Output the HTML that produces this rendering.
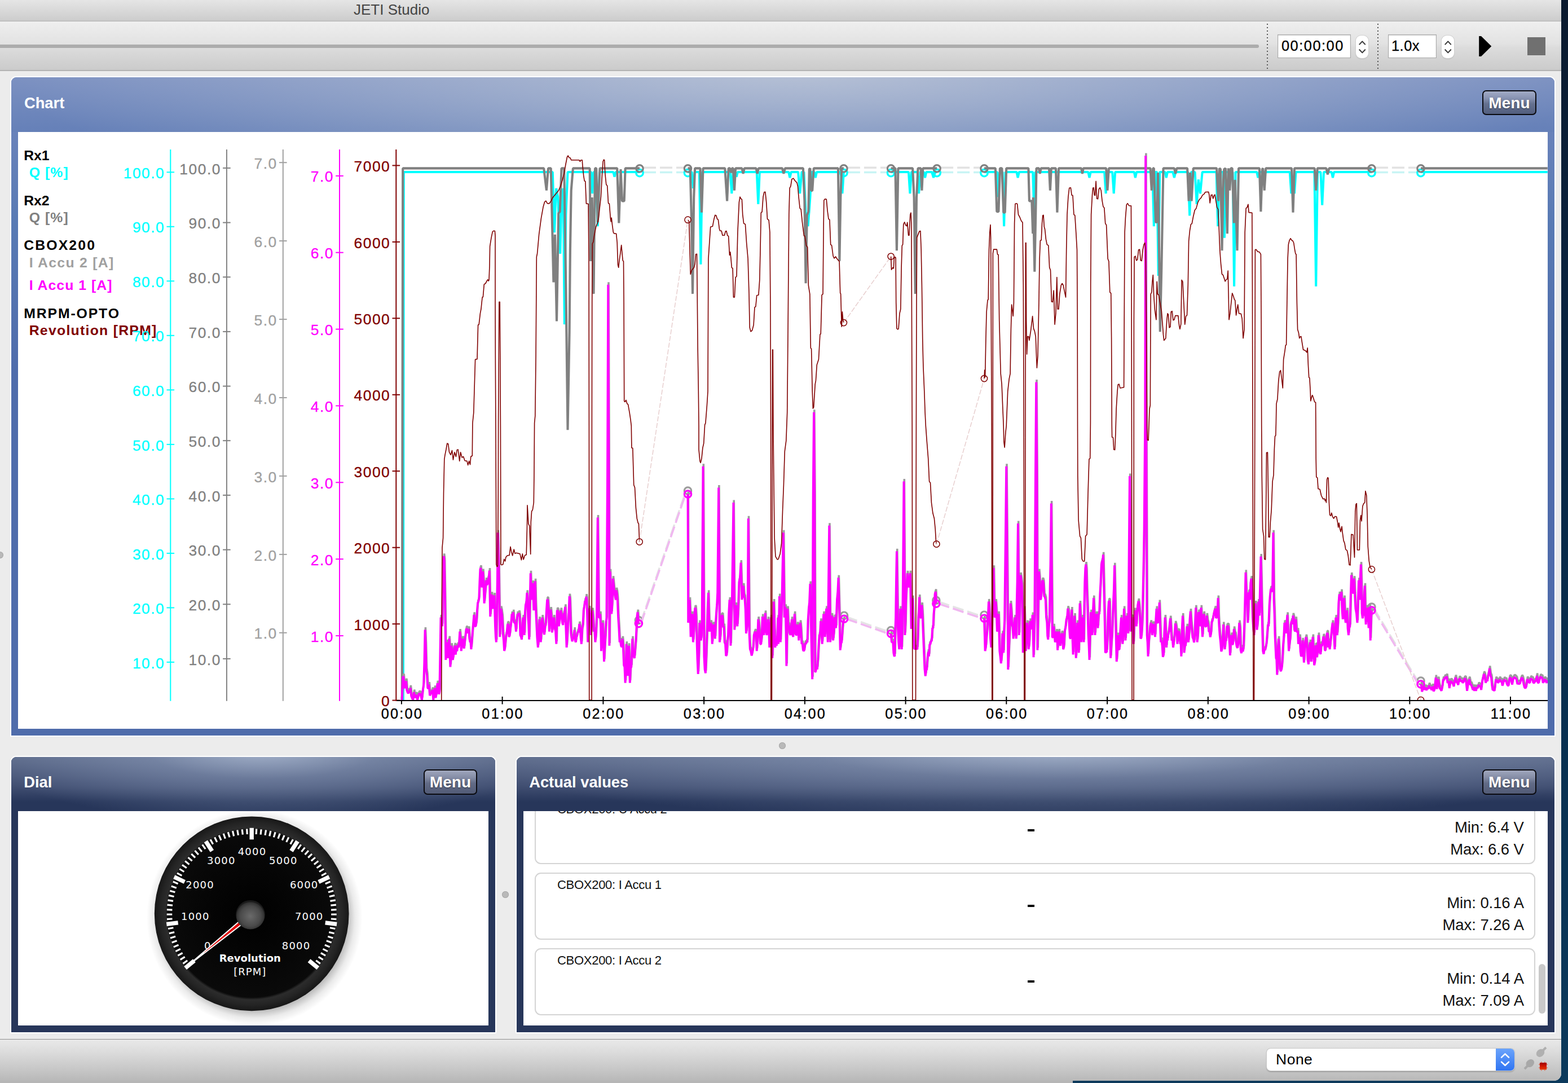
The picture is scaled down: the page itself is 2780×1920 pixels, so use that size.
<!DOCTYPE html>
<html lang="en"><head><meta charset="utf-8"><title>JETI Studio</title>
<style>
*{box-sizing:border-box;margin:0;padding:0}
html,body{width:2780px;height:1920px;overflow:hidden;background:linear-gradient(#0b1a2e 0,#0a2440 30%,#082e4e 62%,#0c3a5c 100%);font-family:"Liberation Sans",sans-serif}
.abs{position:absolute}
#win{position:absolute;left:0;top:0;width:2768px;height:1916px;background:#ececec;border-bottom-right-radius:13px;overflow:hidden}
#under{position:absolute;left:0;top:1916px;width:1902px;height:4px;background:#b6b6b6}
#titlebar{position:absolute;left:0;top:0;width:2768px;height:38px;background:linear-gradient(#e5e5e5,#d0d0d0 85%,#cacaca);border-bottom:1.5px solid #b0b0b0}
#title{position:absolute;left:627px;top:2.3px;font-size:26px;line-height:30px;color:#444;white-space:nowrap}
#toolbar{position:absolute;left:0;top:38px;width:2768px;height:87.5px;background:linear-gradient(#efefef 0,#e2e2e2 46%,#dcdcdc 54%,#cbcbcb 100%);border-bottom:2px solid #b3b3b3}
#groove{position:absolute;left:-10px;top:79px;width:2241.5px;height:6px;background:#acacac;border-radius:3px}
.dots{position:absolute;top:42px;height:80px;width:2px;background:repeating-linear-gradient(to bottom,#555 0,#555 2px,transparent 2px,transparent 6px)}
.field{position:absolute;top:61px;height:41.5px;background:#fff;border:1.5px solid #a9a9a9;box-shadow:inset 0 1px 2px rgba(0,0,0,.18);font-size:25.4px;line-height:39px;color:#000;white-space:nowrap;letter-spacing:1.5px;-webkit-text-stroke:.3px #000}
.step{position:absolute;top:62.5px;height:40.5px;width:22.5px;background:#fff;border-radius:9px;box-shadow:0 0 0 1px #d2d2d2,0 1px 2px rgba(0,0,0,.25)}
.step svg{position:absolute;left:0;top:0}
.panel{position:absolute;border:2px solid #fff;border-radius:11px 11px 0 0}
.panel .hdr{position:absolute;left:0;top:0;right:0;height:97px;border-radius:9px 9px 0 0}
.panel .ttl{position:absolute;left:22.2px;top:28.8px;font-size:27.3px;line-height:32px;font-weight:bold;color:#fff;white-space:nowrap}
.panel .white{position:absolute;background:#fff;overflow:hidden}
.menu{position:absolute;width:95.5px;height:44.5px;border:2.5px solid #0a0a0f;border-radius:7px;color:#fff;font-weight:bold;font-size:28px;line-height:42.5px;letter-spacing:.1px;text-align:center;text-shadow:0 1px 2px rgba(0,0,0,.5)}
#chartp{left:18.2px;top:135.4px;width:2739.6px;height:1170.8px;background:linear-gradient(#7c92c2 0,#6982ba 96px,#587ab4 260px,#4f6cab 520px,#4f6cab 100%)}
#chartp .hdr{background:radial-gradient(ellipse 1420px 235px at 51% -10px,rgba(215,220,225,.64) 0,rgba(215,220,225,.35) 46%,rgba(215,220,225,0) 100%),linear-gradient(#7b90c1,#6580b8)}
#chartp .ttl{top:30.1px;left:22.8px}
#chartp .menu{left:2608px;top:22.5px;background:linear-gradient(#a2abc6 0,#8893b2 30%,#65718f 55%,#525e7e 100%)}
.dark{background:#27365a}
.dark .hdr{background:radial-gradient(ellipse 60% 130% at 52% -12%,rgba(190,204,226,.72) 0,rgba(150,166,196,.44) 40%,rgba(60,76,112,0) 100%),linear-gradient(#5c6a8a 0,#3f4d70 55%,#27365a 82%,#27365a 100%)}
.dark .menu{top:22px;background:linear-gradient(#a0a7bd 0,#858da6 30%,#626b86 55%,#525b76 100%)}
.dot{position:absolute;width:12px;height:12px;border-radius:50%;background:#b9b9b9;box-shadow:inset 0 0 0 1px #a8a8a8}
.leg{position:absolute;font-weight:bold;font-size:24.8px;line-height:28px;white-space:nowrap}
.card{position:absolute;left:20.3px;width:1774px;height:119px;border:2px solid #d4d4d4;border-radius:11px;background:#fff}
.card .nm{position:absolute;left:37.5px;top:7.1px;font-size:22px;line-height:24px;color:#111;letter-spacing:-.28px;white-space:nowrap}
.card .dash{position:absolute;left:871.4px;top:54.5px;width:12px;height:4px;background:#000}
.card .mm{position:absolute;right:18.6px;font-size:27.5px;line-height:30px;color:#111;letter-spacing:-.08px;white-space:nowrap;text-align:right}
#status{position:absolute;left:0;top:1842px;width:2768px;height:74px;background:linear-gradient(#e9e9e9 0,#dcdcdc 30%,#c3c3c3 80%,#b8b8b8 100%);border-top:1.5px solid #8f8f8f}
#combo{position:absolute;left:2245.5px;top:1858.5px;width:439.5px;height:39px;background:#fff;border-radius:7px;box-shadow:0 0 0 1px #c9c9c9,0 1.5px 2.5px rgba(0,0,0,.3);overflow:hidden;font-size:26.5px;line-height:38px;color:#000}
#combo span{position:absolute;left:16.5px;top:0;letter-spacing:.5px}
#combo i{position:absolute;right:0;top:0;width:33px;height:39px;background:linear-gradient(#6ba4fb,#2f74f2)}
svg.chart,svg.dial{position:absolute;left:0;top:0;pointer-events:none}
</style></head>
<body>
<div id="under"></div>
<div id="win">
 <div id="titlebar"><div id="title">JETI Studio</div></div>
 <div id="toolbar"></div>
 <div id="groove"></div>
 <div class="dots" style="left:2246px"></div>
 <div class="dots" style="left:2442px"></div>
 <div class="field" style="left:2265px;width:129.5px;padding-left:6px">00:00:00</div>
 <div class="step" style="left:2403.5px"><svg width="22.5" height="40.5" viewBox="0 0 22.5 40.5"><path d="M6.3 15.6 L11.25 10.4 L16.2 15.6 M6.3 25.2 L11.25 30.4 L16.2 25.2" fill="none" stroke="#3a3a3a" stroke-width="2.1" stroke-linecap="round" stroke-linejoin="round"/></svg></div>
 <div class="field" style="left:2461px;width:86px;padding-left:5px;letter-spacing:.5px">1.0x</div>
 <div class="step" style="left:2555.5px"><svg width="22.5" height="40.5" viewBox="0 0 22.5 40.5"><path d="M6.3 15.6 L11.25 10.4 L16.2 15.6 M6.3 25.2 L11.25 30.4 L16.2 25.2" fill="none" stroke="#3a3a3a" stroke-width="2.1" stroke-linecap="round" stroke-linejoin="round"/></svg></div>
 <svg class="abs" style="left:2620px;top:62px" width="28" height="40" viewBox="0 0 28 40"><path d="M2.2 2 L6 2 L24.3 20 L6 38 L2.2 38 Z" fill="#000"/></svg>
 <div class="abs" style="left:2708.3px;top:66px;width:31.5px;height:32px;background:#707070"></div>

 <div class="dot" style="left:-6px;top:978px"></div>
 <div class="dot" style="left:1381px;top:1316px"></div>
 <div class="dot" style="left:890px;top:1579.5px"></div>

 <!-- Chart panel -->
 <div class="panel" id="chartp">
  <div class="hdr"></div>
  <div class="ttl">Chart</div>
  <div class="menu">Menu</div>
  <div class="white" style="left:11.7px;top:96.4px;width:2712px;height:1058.2px"></div>
 </div>
 <div class="leg" style="left:42.2px;top:261.5px;color:#000;letter-spacing:-0.08px">Rx1</div>
 <div class="leg" style="left:51.7px;top:292.0px;color:#00ffff;letter-spacing:1.07px">Q [%]</div>
 <div class="leg" style="left:42.2px;top:341.5px;color:#000;letter-spacing:-0.08px">Rx2</div>
 <div class="leg" style="left:51.7px;top:372.0px;color:#808080;letter-spacing:1.07px">Q [%]</div>
 <div class="leg" style="left:42.2px;top:421.3px;color:#000;letter-spacing:2.12px">CBOX200</div>
 <div class="leg" style="left:51.7px;top:451.6px;color:#a0a0a0;letter-spacing:1.27px">I Accu 2 [A]</div>
 <div class="leg" style="left:51.7px;top:491.6px;color:#ff00ff;letter-spacing:1.02px">I Accu 1 [A]</div>
 <div class="leg" style="left:42.2px;top:542.0px;color:#000;letter-spacing:1.87px">MRPM-OPTO</div>
 <div class="leg" style="left:51.7px;top:572.0px;color:#800000;letter-spacing:1.27px">Revolution [RPM]</div>
<svg class="chart" width="2780" height="1920" viewBox="0 0 2780 1920">
<defs><clipPath id="pc"><rect x="700" y="262" width="2044" height="981"/></clipPath></defs>
<line x1="302.3" y1="265" x2="302.3" y2="1242.8" stroke="#00ffff" stroke-width="2"/>
<line x1="295.5" y1="305.3" x2="309.1" y2="305.3" stroke="#00ffff" stroke-width="2"/>
<text x="292.3" y="315.9" text-anchor="end" fill="#00ffff" stroke="#00ffff" stroke-width="0.3" font-size="26.4" letter-spacing="1.5" font-family="Liberation Sans, sans-serif">100.0</text>
<line x1="295.5" y1="401.8" x2="309.1" y2="401.8" stroke="#00ffff" stroke-width="2"/>
<text x="292.3" y="412.4" text-anchor="end" fill="#00ffff" stroke="#00ffff" stroke-width="0.3" font-size="26.4" letter-spacing="1.5" font-family="Liberation Sans, sans-serif">90.0</text>
<line x1="295.5" y1="498.3" x2="309.1" y2="498.3" stroke="#00ffff" stroke-width="2"/>
<text x="292.3" y="508.9" text-anchor="end" fill="#00ffff" stroke="#00ffff" stroke-width="0.3" font-size="26.4" letter-spacing="1.5" font-family="Liberation Sans, sans-serif">80.0</text>
<line x1="295.5" y1="594.8" x2="309.1" y2="594.8" stroke="#00ffff" stroke-width="2"/>
<text x="292.3" y="605.4" text-anchor="end" fill="#00ffff" stroke="#00ffff" stroke-width="0.3" font-size="26.4" letter-spacing="1.5" font-family="Liberation Sans, sans-serif">70.0</text>
<line x1="295.5" y1="691.3" x2="309.1" y2="691.3" stroke="#00ffff" stroke-width="2"/>
<text x="292.3" y="701.9" text-anchor="end" fill="#00ffff" stroke="#00ffff" stroke-width="0.3" font-size="26.4" letter-spacing="1.5" font-family="Liberation Sans, sans-serif">60.0</text>
<line x1="295.5" y1="787.9" x2="309.1" y2="787.9" stroke="#00ffff" stroke-width="2"/>
<text x="292.3" y="798.5" text-anchor="end" fill="#00ffff" stroke="#00ffff" stroke-width="0.3" font-size="26.4" letter-spacing="1.5" font-family="Liberation Sans, sans-serif">50.0</text>
<line x1="295.5" y1="884.4" x2="309.1" y2="884.4" stroke="#00ffff" stroke-width="2"/>
<text x="292.3" y="895.0" text-anchor="end" fill="#00ffff" stroke="#00ffff" stroke-width="0.3" font-size="26.4" letter-spacing="1.5" font-family="Liberation Sans, sans-serif">40.0</text>
<line x1="295.5" y1="980.9" x2="309.1" y2="980.9" stroke="#00ffff" stroke-width="2"/>
<text x="292.3" y="991.5" text-anchor="end" fill="#00ffff" stroke="#00ffff" stroke-width="0.3" font-size="26.4" letter-spacing="1.5" font-family="Liberation Sans, sans-serif">30.0</text>
<line x1="295.5" y1="1077.4" x2="309.1" y2="1077.4" stroke="#00ffff" stroke-width="2"/>
<text x="292.3" y="1088.0" text-anchor="end" fill="#00ffff" stroke="#00ffff" stroke-width="0.3" font-size="26.4" letter-spacing="1.5" font-family="Liberation Sans, sans-serif">20.0</text>
<line x1="295.5" y1="1173.9" x2="309.1" y2="1173.9" stroke="#00ffff" stroke-width="2"/>
<text x="292.3" y="1184.5" text-anchor="end" fill="#00ffff" stroke="#00ffff" stroke-width="0.3" font-size="26.4" letter-spacing="1.5" font-family="Liberation Sans, sans-serif">10.0</text>
<line x1="401.9" y1="265" x2="401.9" y2="1242.8" stroke="#808080" stroke-width="2"/>
<line x1="395.09999999999997" y1="297.9" x2="408.7" y2="297.9" stroke="#808080" stroke-width="2"/>
<text x="391.9" y="308.5" text-anchor="end" fill="#808080" stroke="#808080" stroke-width="0.3" font-size="26.4" letter-spacing="1.5" font-family="Liberation Sans, sans-serif">100.0</text>
<line x1="395.09999999999997" y1="394.6" x2="408.7" y2="394.6" stroke="#808080" stroke-width="2"/>
<text x="391.9" y="405.2" text-anchor="end" fill="#808080" stroke="#808080" stroke-width="0.3" font-size="26.4" letter-spacing="1.5" font-family="Liberation Sans, sans-serif">90.0</text>
<line x1="395.09999999999997" y1="491.2" x2="408.7" y2="491.2" stroke="#808080" stroke-width="2"/>
<text x="391.9" y="501.8" text-anchor="end" fill="#808080" stroke="#808080" stroke-width="0.3" font-size="26.4" letter-spacing="1.5" font-family="Liberation Sans, sans-serif">80.0</text>
<line x1="395.09999999999997" y1="587.9" x2="408.7" y2="587.9" stroke="#808080" stroke-width="2"/>
<text x="391.9" y="598.5" text-anchor="end" fill="#808080" stroke="#808080" stroke-width="0.3" font-size="26.4" letter-spacing="1.5" font-family="Liberation Sans, sans-serif">70.0</text>
<line x1="395.09999999999997" y1="684.6" x2="408.7" y2="684.6" stroke="#808080" stroke-width="2"/>
<text x="391.9" y="695.2" text-anchor="end" fill="#808080" stroke="#808080" stroke-width="0.3" font-size="26.4" letter-spacing="1.5" font-family="Liberation Sans, sans-serif">60.0</text>
<line x1="395.09999999999997" y1="781.2" x2="408.7" y2="781.2" stroke="#808080" stroke-width="2"/>
<text x="391.9" y="791.9" text-anchor="end" fill="#808080" stroke="#808080" stroke-width="0.3" font-size="26.4" letter-spacing="1.5" font-family="Liberation Sans, sans-serif">50.0</text>
<line x1="395.09999999999997" y1="877.9" x2="408.7" y2="877.9" stroke="#808080" stroke-width="2"/>
<text x="391.9" y="888.5" text-anchor="end" fill="#808080" stroke="#808080" stroke-width="0.3" font-size="26.4" letter-spacing="1.5" font-family="Liberation Sans, sans-serif">40.0</text>
<line x1="395.09999999999997" y1="974.6" x2="408.7" y2="974.6" stroke="#808080" stroke-width="2"/>
<text x="391.9" y="985.2" text-anchor="end" fill="#808080" stroke="#808080" stroke-width="0.3" font-size="26.4" letter-spacing="1.5" font-family="Liberation Sans, sans-serif">30.0</text>
<line x1="395.09999999999997" y1="1071.3" x2="408.7" y2="1071.3" stroke="#808080" stroke-width="2"/>
<text x="391.9" y="1081.9" text-anchor="end" fill="#808080" stroke="#808080" stroke-width="0.3" font-size="26.4" letter-spacing="1.5" font-family="Liberation Sans, sans-serif">20.0</text>
<line x1="395.09999999999997" y1="1167.9" x2="408.7" y2="1167.9" stroke="#808080" stroke-width="2"/>
<text x="391.9" y="1178.5" text-anchor="end" fill="#808080" stroke="#808080" stroke-width="0.3" font-size="26.4" letter-spacing="1.5" font-family="Liberation Sans, sans-serif">10.0</text>
<line x1="501.8" y1="265" x2="501.8" y2="1242.8" stroke="#a0a0a0" stroke-width="2"/>
<line x1="495.0" y1="288.2" x2="508.6" y2="288.2" stroke="#a0a0a0" stroke-width="2"/>
<text x="491.8" y="298.8" text-anchor="end" fill="#a0a0a0" stroke="#a0a0a0" stroke-width="0.3" font-size="26.4" letter-spacing="1.5" font-family="Liberation Sans, sans-serif">7.0</text>
<line x1="495.0" y1="427.1" x2="508.6" y2="427.1" stroke="#a0a0a0" stroke-width="2"/>
<text x="491.8" y="437.7" text-anchor="end" fill="#a0a0a0" stroke="#a0a0a0" stroke-width="0.3" font-size="26.4" letter-spacing="1.5" font-family="Liberation Sans, sans-serif">6.0</text>
<line x1="495.0" y1="566.1" x2="508.6" y2="566.1" stroke="#a0a0a0" stroke-width="2"/>
<text x="491.8" y="576.7" text-anchor="end" fill="#a0a0a0" stroke="#a0a0a0" stroke-width="0.3" font-size="26.4" letter-spacing="1.5" font-family="Liberation Sans, sans-serif">5.0</text>
<line x1="495.0" y1="705.0" x2="508.6" y2="705.0" stroke="#a0a0a0" stroke-width="2"/>
<text x="491.8" y="715.6" text-anchor="end" fill="#a0a0a0" stroke="#a0a0a0" stroke-width="0.3" font-size="26.4" letter-spacing="1.5" font-family="Liberation Sans, sans-serif">4.0</text>
<line x1="495.0" y1="843.9" x2="508.6" y2="843.9" stroke="#a0a0a0" stroke-width="2"/>
<text x="491.8" y="854.5" text-anchor="end" fill="#a0a0a0" stroke="#a0a0a0" stroke-width="0.3" font-size="26.4" letter-spacing="1.5" font-family="Liberation Sans, sans-serif">3.0</text>
<line x1="495.0" y1="982.9" x2="508.6" y2="982.9" stroke="#a0a0a0" stroke-width="2"/>
<text x="491.8" y="993.5" text-anchor="end" fill="#a0a0a0" stroke="#a0a0a0" stroke-width="0.3" font-size="26.4" letter-spacing="1.5" font-family="Liberation Sans, sans-serif">2.0</text>
<line x1="495.0" y1="1121.8" x2="508.6" y2="1121.8" stroke="#a0a0a0" stroke-width="2"/>
<text x="491.8" y="1132.4" text-anchor="end" fill="#a0a0a0" stroke="#a0a0a0" stroke-width="0.3" font-size="26.4" letter-spacing="1.5" font-family="Liberation Sans, sans-serif">1.0</text>
<line x1="602.0" y1="265" x2="602.0" y2="1242.8" stroke="#ff00ff" stroke-width="2"/>
<line x1="595.2" y1="311.8" x2="608.8" y2="311.8" stroke="#ff00ff" stroke-width="2"/>
<text x="592.0" y="322.4" text-anchor="end" fill="#ff00ff" stroke="#ff00ff" stroke-width="0.3" font-size="26.4" letter-spacing="1.5" font-family="Liberation Sans, sans-serif">7.0</text>
<line x1="595.2" y1="447.7" x2="608.8" y2="447.7" stroke="#ff00ff" stroke-width="2"/>
<text x="592.0" y="458.3" text-anchor="end" fill="#ff00ff" stroke="#ff00ff" stroke-width="0.3" font-size="26.4" letter-spacing="1.5" font-family="Liberation Sans, sans-serif">6.0</text>
<line x1="595.2" y1="583.6" x2="608.8" y2="583.6" stroke="#ff00ff" stroke-width="2"/>
<text x="592.0" y="594.2" text-anchor="end" fill="#ff00ff" stroke="#ff00ff" stroke-width="0.3" font-size="26.4" letter-spacing="1.5" font-family="Liberation Sans, sans-serif">5.0</text>
<line x1="595.2" y1="719.4" x2="608.8" y2="719.4" stroke="#ff00ff" stroke-width="2"/>
<text x="592.0" y="730.0" text-anchor="end" fill="#ff00ff" stroke="#ff00ff" stroke-width="0.3" font-size="26.4" letter-spacing="1.5" font-family="Liberation Sans, sans-serif">4.0</text>
<line x1="595.2" y1="855.3" x2="608.8" y2="855.3" stroke="#ff00ff" stroke-width="2"/>
<text x="592.0" y="865.9" text-anchor="end" fill="#ff00ff" stroke="#ff00ff" stroke-width="0.3" font-size="26.4" letter-spacing="1.5" font-family="Liberation Sans, sans-serif">3.0</text>
<line x1="595.2" y1="991.2" x2="608.8" y2="991.2" stroke="#ff00ff" stroke-width="2"/>
<text x="592.0" y="1001.8" text-anchor="end" fill="#ff00ff" stroke="#ff00ff" stroke-width="0.3" font-size="26.4" letter-spacing="1.5" font-family="Liberation Sans, sans-serif">2.0</text>
<line x1="595.2" y1="1127.1" x2="608.8" y2="1127.1" stroke="#ff00ff" stroke-width="2"/>
<text x="592.0" y="1137.7" text-anchor="end" fill="#ff00ff" stroke="#ff00ff" stroke-width="0.3" font-size="26.4" letter-spacing="1.5" font-family="Liberation Sans, sans-serif">1.0</text>
<line x1="702.3" y1="265" x2="702.3" y2="1242.8" stroke="#800000" stroke-width="2"/>
<line x1="695.5" y1="293.4" x2="709.0999999999999" y2="293.4" stroke="#800000" stroke-width="2"/>
<text x="692.3" y="304.0" text-anchor="end" fill="#800000" stroke="#800000" stroke-width="0.3" font-size="26.4" letter-spacing="1.5" font-family="Liberation Sans, sans-serif">7000</text>
<line x1="695.5" y1="428.9" x2="709.0999999999999" y2="428.9" stroke="#800000" stroke-width="2"/>
<text x="692.3" y="439.5" text-anchor="end" fill="#800000" stroke="#800000" stroke-width="0.3" font-size="26.4" letter-spacing="1.5" font-family="Liberation Sans, sans-serif">6000</text>
<line x1="695.5" y1="564.3" x2="709.0999999999999" y2="564.3" stroke="#800000" stroke-width="2"/>
<text x="692.3" y="574.9" text-anchor="end" fill="#800000" stroke="#800000" stroke-width="0.3" font-size="26.4" letter-spacing="1.5" font-family="Liberation Sans, sans-serif">5000</text>
<line x1="695.5" y1="699.8" x2="709.0999999999999" y2="699.8" stroke="#800000" stroke-width="2"/>
<text x="692.3" y="710.4" text-anchor="end" fill="#800000" stroke="#800000" stroke-width="0.3" font-size="26.4" letter-spacing="1.5" font-family="Liberation Sans, sans-serif">4000</text>
<line x1="695.5" y1="835.2" x2="709.0999999999999" y2="835.2" stroke="#800000" stroke-width="2"/>
<text x="692.3" y="845.8" text-anchor="end" fill="#800000" stroke="#800000" stroke-width="0.3" font-size="26.4" letter-spacing="1.5" font-family="Liberation Sans, sans-serif">3000</text>
<line x1="695.5" y1="970.7" x2="709.0999999999999" y2="970.7" stroke="#800000" stroke-width="2"/>
<text x="692.3" y="981.3" text-anchor="end" fill="#800000" stroke="#800000" stroke-width="0.3" font-size="26.4" letter-spacing="1.5" font-family="Liberation Sans, sans-serif">2000</text>
<line x1="695.5" y1="1106.2" x2="709.0999999999999" y2="1106.2" stroke="#800000" stroke-width="2"/>
<text x="692.3" y="1116.8" text-anchor="end" fill="#800000" stroke="#800000" stroke-width="0.3" font-size="26.4" letter-spacing="1.5" font-family="Liberation Sans, sans-serif">1000</text>
<line x1="695.5" y1="1241.6" x2="709.0999999999999" y2="1241.6" stroke="#800000" stroke-width="2"/>
<text x="692.3" y="1252.2" text-anchor="end" fill="#800000" stroke="#800000" stroke-width="0.3" font-size="26.4" letter-spacing="1.5" font-family="Liberation Sans, sans-serif">0</text>
<line x1="711.9" y1="1235" x2="711.9" y2="1248.5" stroke="#000" stroke-width="2"/>
<text x="712.9" y="1274.2" text-anchor="middle" fill="#000" stroke="#000" stroke-width="0.35" font-size="25.2" letter-spacing="2.3" font-family="Liberation Sans, sans-serif">00:00</text>
<line x1="890.6" y1="1235" x2="890.6" y2="1248.5" stroke="#000" stroke-width="2"/>
<text x="891.6" y="1274.2" text-anchor="middle" fill="#000" stroke="#000" stroke-width="0.35" font-size="25.2" letter-spacing="2.3" font-family="Liberation Sans, sans-serif">01:00</text>
<line x1="1069.4" y1="1235" x2="1069.4" y2="1248.5" stroke="#000" stroke-width="2"/>
<text x="1070.4" y="1274.2" text-anchor="middle" fill="#000" stroke="#000" stroke-width="0.35" font-size="25.2" letter-spacing="2.3" font-family="Liberation Sans, sans-serif">02:00</text>
<line x1="1248.1" y1="1235" x2="1248.1" y2="1248.5" stroke="#000" stroke-width="2"/>
<text x="1249.1" y="1274.2" text-anchor="middle" fill="#000" stroke="#000" stroke-width="0.35" font-size="25.2" letter-spacing="2.3" font-family="Liberation Sans, sans-serif">03:00</text>
<line x1="1426.9" y1="1235" x2="1426.9" y2="1248.5" stroke="#000" stroke-width="2"/>
<text x="1427.9" y="1274.2" text-anchor="middle" fill="#000" stroke="#000" stroke-width="0.35" font-size="25.2" letter-spacing="2.3" font-family="Liberation Sans, sans-serif">04:00</text>
<line x1="1605.6" y1="1235" x2="1605.6" y2="1248.5" stroke="#000" stroke-width="2"/>
<text x="1606.6" y="1274.2" text-anchor="middle" fill="#000" stroke="#000" stroke-width="0.35" font-size="25.2" letter-spacing="2.3" font-family="Liberation Sans, sans-serif">05:00</text>
<line x1="1784.3" y1="1235" x2="1784.3" y2="1248.5" stroke="#000" stroke-width="2"/>
<text x="1785.3" y="1274.2" text-anchor="middle" fill="#000" stroke="#000" stroke-width="0.35" font-size="25.2" letter-spacing="2.3" font-family="Liberation Sans, sans-serif">06:00</text>
<line x1="1963.1" y1="1235" x2="1963.1" y2="1248.5" stroke="#000" stroke-width="2"/>
<text x="1964.1" y="1274.2" text-anchor="middle" fill="#000" stroke="#000" stroke-width="0.35" font-size="25.2" letter-spacing="2.3" font-family="Liberation Sans, sans-serif">07:00</text>
<line x1="2141.8" y1="1235" x2="2141.8" y2="1248.5" stroke="#000" stroke-width="2"/>
<text x="2142.8" y="1274.2" text-anchor="middle" fill="#000" stroke="#000" stroke-width="0.35" font-size="25.2" letter-spacing="2.3" font-family="Liberation Sans, sans-serif">08:00</text>
<line x1="2320.6" y1="1235" x2="2320.6" y2="1248.5" stroke="#000" stroke-width="2"/>
<text x="2321.6" y="1274.2" text-anchor="middle" fill="#000" stroke="#000" stroke-width="0.35" font-size="25.2" letter-spacing="2.3" font-family="Liberation Sans, sans-serif">09:00</text>
<line x1="2499.3" y1="1235" x2="2499.3" y2="1248.5" stroke="#000" stroke-width="2"/>
<text x="2500.3" y="1274.2" text-anchor="middle" fill="#000" stroke="#000" stroke-width="0.35" font-size="25.2" letter-spacing="2.3" font-family="Liberation Sans, sans-serif">10:00</text>
<line x1="2678.0" y1="1235" x2="2678.0" y2="1248.5" stroke="#000" stroke-width="2"/>
<text x="2679.0" y="1274.2" text-anchor="middle" fill="#000" stroke="#000" stroke-width="0.35" font-size="25.2" letter-spacing="2.3" font-family="Liberation Sans, sans-serif">11:00</text>
<g clip-path="url(#pc)" fill="none" stroke-linejoin="bevel">
<path d="M714.8,1241.0 L715.8,304.5 L979.8,304.5 L983.0,411.7 L986.1,333.3 L989.2,349.0 L993.3,449.3 L995.5,349.0 L998.6,333.3 L1000.8,574.6 L1003.3,380.3 L1006.5,304.5 L1048.1,304.5 L1050.3,342.7 L1052.5,304.5 L1056.0,304.5 L1059.7,400.7 L1062.9,304.5 L1087.3,304.5 L1089.5,313.0 L1091.7,304.5 L1134.0,304.5" stroke="#00ffff" stroke-width="4.0" transform="translate(0,0.5)"/>
<path d="M1219.5,304.5 L1226.4,304.5 L1228.9,333.3 L1231.5,304.5 L1239.9,304.5 L1242.4,468.1 L1244.9,304.5 L1294.7,304.5 L1297.3,342.7 L1299.8,304.5 L1303.5,304.5 L1305.7,313.0 L1307.9,304.5 L1341.7,304.5 L1344.3,361.5 L1346.8,304.5 L1398.2,304.5 L1400.4,314.5 L1402.6,304.5 L1415.1,304.5 L1418.2,342.7 L1421.4,304.5 L1425.4,304.5 L1428.6,380.3 L1432.6,400.7 L1436.4,349.0 L1438.9,304.5 L1443.6,304.5 L1445.8,314.5 L1448.0,304.5 L1490.9,304.5 L1493.4,342.7 L1495.9,304.5" stroke="#00ffff" stroke-width="4.0" transform="translate(0,0.5)"/>
<path d="M1579.6,304.5 L1610.9,304.5 L1613.4,342.7 L1615.9,304.5 L1626.6,304.5 L1629.1,342.7 L1631.6,304.5 L1637.9,304.5 L1640.1,314.5 L1642.3,304.5 L1652.0,304.5 L1655.1,314.5 L1658.2,304.5 L1661.1,304.5" stroke="#00ffff" stroke-width="4.0" transform="translate(0,0.5)"/>
<path d="M1745.0,304.5 L1767.9,304.5 L1770.1,349.0 L1772.3,304.5 L1777.6,304.5 L1780.1,400.7 L1782.6,304.5 L1802.4,304.5 L1804.6,314.5 L1806.8,304.5 L1831.2,304.5 L1833.4,375.6 L1835.6,304.5 L1929.3,304.5 L1931.5,314.5 L1933.7,304.5 L1958.1,304.5 L1960.6,342.7 L1963.1,304.5 L1972.2,304.5 L1974.7,342.7 L1977.2,304.5 L2010.8,304.5 L2012.9,314.5 L2015.1,304.5 L2043.3,304.5 L2045.8,400.7 L2048.4,304.5 L2051.2,304.5 L2053.7,488.4 L2056.2,304.5 L2065.6,304.5 L2067.8,314.5 L2070.0,304.5 L2079.4,304.5 L2081.9,314.5 L2084.4,304.5 L2106.3,304.5 L2109.2,381.9 L2112.0,304.5 L2118.6,304.5 L2121.7,361.5 L2124.8,317.7 L2128.0,342.7 L2131.7,304.5 L2156.5,304.5 L2159.3,400.7 L2162.1,304.5 L2168.4,304.5 L2170.9,421.1 L2173.4,304.5 L2185.6,304.5 L2188.1,507.2 L2190.6,304.5 L2228.2,304.5 L2230.4,314.5 L2232.6,304.5 L2286.8,304.5 L2289.3,342.7 L2291.8,317.7 L2295.0,342.7 L2297.5,304.5 L2330.4,304.5 L2333.2,507.2 L2336.0,304.5 L2341.4,304.5 L2344.2,363.1 L2347.0,304.5 L2360.8,304.5 L2363.0,314.5 L2365.2,304.5 L2431.9,304.5" stroke="#00ffff" stroke-width="4.0" transform="translate(0,0.5)"/>
<path d="M2519.0,304.5 L2743.7,304.5" stroke="#00ffff" stroke-width="4.0" transform="translate(0,0.5)"/>
<line x1="1141.0" y1="305.5" x2="1212.5" y2="305.5" stroke="#c8f4f4" stroke-width="3.6" stroke-dasharray="22 7"/>
<circle cx="1134.0" cy="306.5" r="6.2" stroke="#00ffff" stroke-width="3.4"/>
<circle cx="1219.5" cy="306.5" r="6.2" stroke="#00ffff" stroke-width="3.4"/>
<line x1="1502.9" y1="305.5" x2="1572.6" y2="305.5" stroke="#c8f4f4" stroke-width="3.6" stroke-dasharray="22 7"/>
<circle cx="1495.9" cy="306.5" r="6.2" stroke="#00ffff" stroke-width="3.4"/>
<circle cx="1579.6" cy="306.5" r="6.2" stroke="#00ffff" stroke-width="3.4"/>
<line x1="1668.1" y1="305.5" x2="1738.0" y2="305.5" stroke="#c8f4f4" stroke-width="3.6" stroke-dasharray="22 7"/>
<circle cx="1661.1" cy="306.5" r="6.2" stroke="#00ffff" stroke-width="3.4"/>
<circle cx="1745.0" cy="306.5" r="6.2" stroke="#00ffff" stroke-width="3.4"/>
<line x1="2438.9" y1="305.5" x2="2512.0" y2="305.5" stroke="#c8f4f4" stroke-width="3.6" stroke-dasharray="22 7"/>
<circle cx="2431.9" cy="306.5" r="6.2" stroke="#00ffff" stroke-width="3.4"/>
<circle cx="2519.0" cy="306.5" r="6.2" stroke="#00ffff" stroke-width="3.4"/>
<path d="M712.8,1241.0 L714.2,297.3 L964.2,297.3 L968.9,336.5 L972.0,297.3 L976.7,297.3 L981.4,499.4 L983.9,414.8 L987.0,568.3 L990.2,377.2 L992.7,374.1 L995.5,297.3 L1000.2,297.3 L1003.3,505.7 L1006.5,761.0 L1009.6,587.1 L1010.9,443.0 L1012.7,336.5 L1015.9,297.3 L1045.6,297.3 L1047.2,461.8 L1049.7,349.0 L1052.5,519.8 L1055.0,297.3 L1057.2,297.3 L1059.7,392.9 L1063.5,297.3 L1094.2,297.3 L1097.3,394.4 L1100.5,298.9 L1103.0,355.3 L1106.7,355.3 L1108.6,297.3 L1134.0,297.3" stroke="#808080" stroke-width="4.1" transform="translate(0,1.1)"/>
<path d="M1219.5,297.3 L1223.6,297.3 L1225.8,380.3 L1228.0,519.8 L1230.2,349.0 L1232.1,297.3 L1241.5,297.3 L1244.0,375.6 L1246.5,297.3 L1285.3,297.3 L1289.1,355.3 L1291.6,297.3 L1294.1,297.3 L1296.3,305.1 L1297.9,297.3 L1299.8,297.3 L1302.0,336.5 L1304.1,297.3 L1315.4,297.3 L1317.6,306.7 L1319.8,297.3 L1340.5,297.3 L1342.7,306.7 L1344.9,297.3 L1386.9,297.3 L1389.4,306.7 L1391.9,297.3 L1423.9,297.3 L1426.4,355.3 L1428.6,501.0 L1430.8,380.3 L1433.3,374.1 L1434.8,298.9 L1436.4,297.3 L1438.3,336.5 L1440.2,337.1 L1442.7,297.3 L1485.9,297.3 L1488.4,461.8 L1490.3,349.0 L1492.2,297.3 L1495.9,297.3" stroke="#808080" stroke-width="4.1" transform="translate(0,1.1)"/>
<path d="M1579.6,297.3 L1587.4,297.3 L1589.9,443.0 L1592.4,297.3 L1618.1,297.3 L1620.6,349.0 L1622.8,519.8 L1625.0,349.0 L1627.5,297.3 L1632.6,297.3 L1634.4,336.5 L1636.3,297.3 L1661.1,297.3" stroke="#808080" stroke-width="4.1" transform="translate(0,1.1)"/>
<path d="M1745.0,297.3 L1764.8,297.3 L1767.3,374.1 L1770.4,374.1 L1772.9,297.3 L1776.4,297.3 L1779.2,375.6 L1781.7,375.6 L1784.2,297.3 L1823.4,297.3 L1824.9,355.3 L1829.3,355.3 L1831.2,413.2 L1831.8,349.0 L1834.3,480.6 L1836.2,380.3 L1837.5,297.3 L1841.9,297.3 L1843.7,306.7 L1845.6,297.3 L1860.0,297.3 L1861.9,336.5 L1863.8,297.3 L1871.9,297.3 L1874.4,375.6 L1877.0,297.3 L1917.1,297.3 L1918.9,306.7 L1920.8,297.3 L1961.2,297.3 L1963.4,336.5 L1965.9,297.3 L2039.6,297.3 L2041.8,336.5 L2044.3,297.3 L2045.8,297.3 L2049.0,392.9 L2051.2,392.9 L2053.1,305.1 L2054.3,380.3 L2056.8,587.1 L2059.3,474.3 L2062.5,297.3 L2081.9,297.3 L2084.1,306.7 L2086.3,297.3 L2105.1,297.3 L2107.6,355.3 L2110.1,305.1 L2112.6,355.3 L2115.7,297.3 L2157.1,297.3 L2160.2,355.3 L2162.1,297.3 L2164.0,298.9 L2166.5,443.0 L2169.0,317.7 L2170.3,298.9 L2172.8,297.3 L2175.9,413.2 L2177.8,297.3 L2180.3,336.5 L2182.2,297.3 L2184.7,297.3 L2187.8,394.4 L2189.7,317.7 L2193.5,443.0 L2196.0,297.3 L2232.9,297.3 L2235.4,374.1 L2237.9,298.9 L2239.2,297.3 L2241.7,336.5 L2244.2,297.3 L2290.0,297.3 L2292.5,375.6 L2295.0,297.3 L2330.7,297.3 L2333.2,336.5 L2335.7,297.3 L2351.4,297.3 L2353.9,308.3 L2356.4,297.3 L2431.9,297.3" stroke="#808080" stroke-width="4.1" transform="translate(0,1.1)"/>
<path d="M2519.0,297.3 L2743.7,297.3" stroke="#808080" stroke-width="4.1" transform="translate(0,1.1)"/>
<line x1="1141.0" y1="297.3" x2="1212.5" y2="297.3" stroke="#e2e2e2" stroke-width="3.6" stroke-dasharray="22 7"/>
<circle cx="1134.0" cy="298.8" r="6.2" stroke="#808080" stroke-width="3.2"/>
<circle cx="1219.5" cy="298.8" r="6.2" stroke="#808080" stroke-width="3.2"/>
<line x1="1502.9" y1="297.3" x2="1572.6" y2="297.3" stroke="#e2e2e2" stroke-width="3.6" stroke-dasharray="22 7"/>
<circle cx="1495.9" cy="298.8" r="6.2" stroke="#808080" stroke-width="3.2"/>
<circle cx="1579.6" cy="298.8" r="6.2" stroke="#808080" stroke-width="3.2"/>
<line x1="1668.1" y1="297.3" x2="1738.0" y2="297.3" stroke="#e2e2e2" stroke-width="3.6" stroke-dasharray="22 7"/>
<circle cx="1661.1" cy="298.8" r="6.2" stroke="#808080" stroke-width="3.2"/>
<circle cx="1745.0" cy="298.8" r="6.2" stroke="#808080" stroke-width="3.2"/>
<line x1="2438.9" y1="297.3" x2="2512.0" y2="297.3" stroke="#e2e2e2" stroke-width="3.6" stroke-dasharray="22 7"/>
<circle cx="2431.9" cy="298.8" r="6.2" stroke="#808080" stroke-width="3.2"/>
<circle cx="2519.0" cy="298.8" r="6.2" stroke="#808080" stroke-width="3.2"/>
<path d="M712.6,1241.0 L713.5,1215.7 L714.4,1199.6 L715.5,1200.0 L716.6,1218.4 L717.7,1220.0 L718.8,1213.7 L720.1,1207.3 L721.3,1223.1 L722.6,1227.2 L723.8,1229.4 L724.9,1225.1 L726.0,1227.8 L727.6,1219.5 L729.2,1234.1 L730.7,1237.7 L732.3,1241.0 L733.9,1227.1 L735.4,1237.2 L737.0,1233.2 L738.6,1232.5 L740.1,1241.0 L742.7,1229.8 L745.4,1230.4 L748.0,1241.0 L749.5,1225.4 L751.1,1213.7 L752.4,1173.7 L753.6,1116.6 L754.7,1142.9 L755.8,1188.7 L757.1,1197.1 L758.3,1220.0 L759.4,1220.2 L760.5,1213.7 L762.1,1233.2 L763.6,1229.4 L765.2,1228.3 L766.8,1223.1 L768.3,1241.0 L769.6,1227.8 L770.8,1220.0 L772.4,1237.1 L774.0,1229.4 L775.5,1211.4 L777.1,1216.9 L778.2,1230.9 L779.3,1226.3 L781.5,1094.7 L782.7,1097.0 L784.0,1110.3 L784.9,1044.7 L785.9,997.5 L786.8,986.0 L787.8,994.4 L789.0,1063.3 L790.3,1169.9 L791.2,1149.2 L792.1,1138.5 L793.1,1160.9 L794.0,1166.7 L795.3,1141.2 L796.5,1132.3 L797.5,1159.5 L798.4,1182.4 L799.4,1167.2 L800.3,1144.8 L801.5,1154.0 L802.8,1169.9 L804.1,1161.7 L805.3,1151.1 L806.6,1144.4 L807.8,1160.5 L809.1,1145.9 L810.3,1154.2 L811.6,1143.4 L812.8,1147.9 L814.1,1138.5 L815.3,1119.7 L816.6,1135.1 L817.8,1154.2 L819.1,1138.4 L820.3,1132.3 L821.6,1143.1 L822.9,1149.5 L824.1,1136.5 L825.4,1126.0 L826.6,1115.3 L827.9,1115.0 L829.4,1122.7 L831.0,1115.0 L832.3,1132.0 L833.5,1138.5 L834.4,1138.2 L835.4,1151.1 L836.6,1137.3 L837.9,1119.7 L839.1,1105.5 L840.4,1090.0 L842.0,1109.9 L843.5,1110.3 L844.8,1102.2 L846.0,1082.1 L847.1,1068.8 L848.2,1066.5 L849.3,1061.7 L850.4,1032.0 L851.4,1009.5 L852.3,1006.9 L853.2,1022.0 L854.2,1041.4 L855.1,1034.0 L856.1,1013.2 L857.3,1032.4 L858.6,1069.6 L859.7,1056.8 L860.8,1044.5 L861.9,1028.6 L863.0,1036.7 L864.2,1035.6 L865.5,1025.7 L866.6,1025.6 L867.7,1011.6 L869.2,1093.1 L870.5,1075.4 L871.7,1053.9 L873.0,1076.2 L874.2,1079.0 L875.3,1062.4 L876.4,1055.5 L878.0,1110.3 L878.9,1129.5 L879.9,1138.5 L880.8,1087.7 L881.8,1032.0 L882.7,944.3 L884.3,1000.7 L886.2,1129.1 L887.1,1106.2 L888.0,1079.0 L889.3,1085.7 L890.5,1094.7 L891.8,1123.9 L893.0,1135.4 L894.1,1154.0 L895.2,1149.5 L896.3,1137.1 L897.4,1126.0 L898.7,1120.9 L899.9,1107.2 L901.2,1106.8 L902.4,1129.1 L903.7,1126.5 L905.0,1113.5 L906.2,1104.8 L907.5,1088.4 L908.7,1099.7 L910.0,1085.3 L911.2,1103.0 L912.5,1104.1 L913.7,1106.3 L915.0,1119.7 L916.2,1101.1 L917.5,1088.4 L918.9,1092.0 L920.3,1086.8 L921.4,1094.0 L922.5,1126.0 L923.8,1128.9 L925.0,1133.8 L926.3,1105.6 L927.5,1094.7 L928.6,1100.4 L929.7,1126.0 L930.8,1087.9 L931.9,1072.7 L933.2,1068.7 L934.4,1050.8 L935.3,1063.1 L936.3,1094.7 L937.2,1107.7 L938.2,1133.8 L939.4,1072.3 L940.7,1016.3 L941.6,1049.5 L942.6,1063.3 L943.5,1037.6 L944.4,1033.6 L945.4,1056.5 L946.3,1082.1 L947.6,1057.6 L948.8,1030.4 L949.8,1072.5 L950.7,1094.7 L952.3,1129.6 L953.8,1147.9 L955.1,1132.3 L956.3,1097.8 L957.6,1112.4 L958.8,1138.5 L960.1,1114.4 L961.4,1094.7 L962.6,1103.5 L963.9,1119.7 L965.1,1125.0 L966.4,1110.3 L967.6,1108.1 L968.9,1082.1 L970.1,1063.7 L971.4,1063.3 L972.6,1083.1 L973.9,1119.7 L975.1,1093.2 L976.4,1080.6 L977.6,1094.0 L978.9,1121.3 L980.5,1107.6 L982.0,1094.7 L983.5,1112.7 L985.0,1119.8 L986.4,1141.7 L987.7,1082.1 L989.2,1083.3 L990.8,1110.3 L992.1,1098.8 L993.3,1088.1 L994.6,1082.1 L995.8,1094.8 L997.1,1104.1 L998.3,1108.0 L999.6,1088.4 L1000.8,1087.1 L1002.1,1075.9 L1003.3,1112.3 L1004.6,1147.9 L1005.8,1129.1 L1007.1,1104.1 L1008.4,1085.2 L1009.6,1057.1 L1010.5,1064.3 L1011.5,1094.7 L1012.4,1123.1 L1013.4,1130.7 L1014.6,1137.2 L1015.9,1129.1 L1017.1,1132.6 L1018.4,1116.6 L1019.6,1135.3 L1020.9,1138.5 L1022.1,1129.5 L1023.4,1126.0 L1024.6,1120.2 L1025.9,1119.7 L1027.2,1106.3 L1028.4,1113.5 L1029.7,1131.1 L1030.9,1141.7 L1032.2,1114.6 L1033.4,1110.3 L1034.7,1081.9 L1035.9,1075.9 L1037.2,1065.2 L1038.4,1069.6 L1039.4,1057.7 L1040.3,1063.3 L1041.3,1096.8 L1042.2,1138.5 L1043.1,1105.0 L1044.1,1094.7 L1045.0,1078.5 L1046.0,1088.4 L1046.9,1098.1 L1047.8,1126.0 L1049.1,1093.7 L1050.3,1082.1 L1051.6,1097.4 L1052.8,1119.7 L1054.1,1116.8 L1055.4,1138.5 L1056.6,1126.3 L1057.9,1094.7 L1059.7,917.6 L1061.6,1094.7 L1062.9,1094.5 L1064.1,1088.4 L1065.1,1112.2 L1066.0,1154.2 L1067.3,1122.7 L1068.5,1104.1 L1069.8,1134.6 L1071.0,1173.0 L1072.3,1146.0 L1073.5,1126.0 L1074.5,1102.1 L1075.4,1097.8 L1077.0,844.0 L1078.2,504.7 L1079.5,844.0 L1080.4,1144.8 L1081.7,1013.2 L1082.9,1059.9 L1084.2,1088.4 L1085.4,1069.9 L1086.7,1025.7 L1087.9,1037.4 L1089.2,1050.8 L1090.4,1056.7 L1091.7,1063.3 L1092.6,1046.3 L1093.6,1050.8 L1094.8,1062.4 L1096.1,1094.7 L1097.3,1112.5 L1098.6,1138.5 L1099.8,1135.6 L1101.1,1144.8 L1102.4,1147.1 L1103.6,1132.3 L1104.9,1147.0 L1106.1,1179.3 L1107.4,1182.5 L1108.6,1210.6 L1109.6,1187.9 L1110.5,1141.7 L1111.8,1170.6 L1113.0,1198.1 L1113.9,1162.3 L1114.9,1144.8 L1115.8,1178.8 L1116.8,1210.6 L1118.0,1184.2 L1119.3,1182.4 L1120.2,1158.1 L1121.2,1132.3 L1122.4,1160.4 L1123.7,1163.6 L1124.9,1166.8 L1126.2,1151.1 L1127.4,1135.8 L1128.7,1110.3 L1129.6,1091.6 L1130.6,1085.3 L1131.8,1104.1 L1132.4,1105.6" stroke="#9c9c9c" stroke-width="3.6" transform="translate(0.8,-4.5)"/>
<path d="M1219.5,876.0 L1220.2,1104.1 L1221.4,1080.2 L1222.7,1063.3 L1223.6,1087.6 L1224.6,1129.1 L1225.8,1115.8 L1227.1,1088.4 L1228.0,1114.3 L1228.9,1138.5 L1230.2,1119.2 L1231.5,1085.3 L1232.4,1077.7 L1233.3,1079.0 L1234.3,1095.3 L1235.2,1126.0 L1236.5,1168.6 L1237.7,1194.9 L1239.0,1162.1 L1240.2,1104.1 L1241.5,1128.9 L1242.7,1135.4 L1243.7,1127.7 L1244.6,1104.1 L1246.5,826.8 L1248.4,1163.6 L1249.6,1186.8 L1250.9,1193.4 L1252.1,1165.9 L1253.4,1126.0 L1254.6,1081.3 L1255.9,1050.8 L1256.8,1085.7 L1257.8,1119.7 L1259.0,1108.2 L1260.3,1104.1 L1261.5,1110.6 L1262.8,1141.7 L1264.0,1112.2 L1265.3,1107.2 L1266.5,1114.0 L1267.8,1132.3 L1269.1,1100.9 L1270.3,1082.1 L1271.2,1071.5 L1272.2,1050.8 L1274.1,864.4 L1275.9,1138.5 L1277.2,1128.5 L1278.5,1094.7 L1279.7,1091.7 L1281.0,1091.5 L1282.2,1112.3 L1283.5,1110.3 L1284.7,1138.7 L1286.0,1141.7 L1287.2,1162.9 L1288.5,1160.5 L1289.7,1139.7 L1291.0,1126.0 L1292.2,1087.4 L1293.5,1063.3 L1294.4,1097.0 L1295.4,1144.8 L1296.6,1096.2 L1297.9,1063.3 L1300.4,891.0 L1302.3,1116.6 L1303.5,1087.0 L1304.8,1072.7 L1306.0,1094.8 L1307.3,1110.3 L1308.8,1081.6 L1310.4,1032.0 L1312.0,1023.6 L1313.5,997.5 L1314.5,1029.9 L1315.4,1063.3 L1316.7,1054.8 L1317.9,1038.3 L1319.2,1057.0 L1320.4,1060.2 L1321.7,1080.7 L1322.9,1122.9 L1324.2,1112.9 L1325.5,1094.7 L1326.7,919.2 L1328.6,1126.0 L1329.8,1150.8 L1331.1,1154.2 L1332.7,1162.3 L1334.2,1155.8 L1335.5,1147.4 L1336.7,1126.0 L1338.0,1122.3 L1339.2,1119.7 L1340.5,1128.6 L1341.7,1154.2 L1343.0,1133.5 L1344.3,1097.8 L1345.5,1107.6 L1346.8,1126.0 L1348.0,1141.7 L1349.3,1141.7 L1350.5,1129.7 L1351.8,1093.1 L1353.0,1106.8 L1354.3,1126.0 L1355.5,1103.9 L1356.8,1086.8 L1358.0,1118.0 L1359.3,1126.0 L1360.5,1117.8 L1361.8,1097.8 L1363.1,1114.3 L1364.3,1147.9 L1365.6,1111.6 L1366.8,1094.7 L1368.1,1121.6 L1369.3,1166.7 L1370.6,1127.1 L1371.8,1066.5 L1373.1,1115.2 L1374.3,1147.9 L1375.6,1137.2 L1376.8,1144.8 L1378.1,1128.2 L1379.3,1094.7 L1380.0,1141.7 L1380.9,1111.9 L1381.9,1057.1 L1382.8,1101.9 L1383.8,1138.5 L1385.0,1098.6 L1386.3,1066.5 L1388.8,944.3 L1390.7,1094.7 L1391.6,1086.5 L1392.5,1075.9 L1393.5,1118.8 L1394.4,1180.8 L1395.4,1117.3 L1396.3,1079.0 L1397.5,1106.9 L1398.8,1110.3 L1400.1,1122.1 L1401.3,1126.0 L1402.6,1112.6 L1403.8,1097.8 L1405.1,1124.7 L1406.3,1129.1 L1407.6,1107.1 L1408.8,1088.4 L1410.1,1116.9 L1411.3,1126.0 L1412.6,1125.1 L1413.8,1107.2 L1415.1,1113.8 L1416.3,1135.4 L1417.6,1113.3 L1418.9,1104.1 L1420.1,1117.5 L1421.4,1141.7 L1422.6,1140.4 L1423.9,1152.6 L1425.1,1154.1 L1426.4,1151.1 L1427.6,1140.1 L1428.9,1141.7 L1430.1,1138.0 L1431.4,1138.5 L1432.6,1099.2 L1433.9,1079.0 L1435.1,1067.7 L1436.4,1035.1 L1437.3,1076.8 L1438.3,1126.0 L1439.2,1164.1 L1440.2,1204.3 L1441.7,875.3 L1443.0,730.7 L1444.2,875.3 L1445.2,1191.8 L1446.4,1189.3 L1447.7,1182.4 L1448.9,1186.7 L1450.2,1169.9 L1451.4,1145.9 L1452.7,1126.0 L1453.9,1124.3 L1455.2,1100.9 L1456.5,1121.3 L1457.7,1141.7 L1459.0,1115.9 L1460.2,1088.4 L1461.5,1109.4 L1462.7,1129.1 L1464.0,1091.6 L1465.2,1079.0 L1466.5,1107.2 L1467.7,1138.5 L1470.2,931.7 L1472.1,1138.5 L1473.4,1106.8 L1474.6,1091.5 L1475.9,1100.6 L1477.1,1135.4 L1478.4,1122.8 L1479.6,1094.7 L1480.9,1095.6 L1482.1,1113.5 L1483.1,1087.7 L1484.0,1063.3 L1485.3,1049.6 L1486.5,1024.2 L1487.5,1060.9 L1488.4,1094.7 L1489.7,1152.6 L1490.9,1141.1 L1492.2,1138.5 L1493.4,1121.8 L1494.7,1104.1 L1495.6,1102.1 L1496.6,1097.2" stroke="#9c9c9c" stroke-width="3.6" transform="translate(0.8,-4.5)"/>
<path d="M1579.6,1123.5 L1580.9,1138.4 L1582.1,1138.5 L1583.2,1137.7 L1584.3,1157.3 L1585.2,1162.0 L1586.2,1163.6 L1587.1,1122.6 L1588.1,1094.7 L1589.0,1030.1 L1589.9,977.2 L1591.8,1110.3 L1593.1,1137.8 L1594.3,1151.1 L1595.3,1115.2 L1596.2,1079.0 L1597.5,1116.6 L1598.7,1151.1 L1599.7,1114.0 L1600.6,1063.3 L1602.5,853.4 L1604.4,1126.0 L1605.3,1105.4 L1606.2,1063.3 L1607.5,1038.4 L1608.7,1016.3 L1610.0,1031.8 L1611.2,1041.4 L1612.5,1029.0 L1613.8,1016.3 L1614.7,1066.0 L1615.6,1115.0 L1616.9,1092.6 L1618.1,1060.2 L1619.4,1103.6 L1620.6,1149.5 L1622.2,1150.4 L1623.8,1149.5 L1625.0,1149.7 L1626.3,1151.1 L1627.2,1134.4 L1628.2,1094.7 L1629.1,1081.8 L1630.0,1058.6 L1631.0,1086.4 L1631.9,1094.7 L1633.2,1095.2 L1634.4,1072.7 L1635.7,1093.1 L1636.9,1126.0 L1638.2,1157.3 L1639.4,1185.5 L1640.7,1198.6 L1642.0,1188.7 L1643.2,1186.5 L1644.5,1166.7 L1645.7,1155.7 L1647.0,1163.6 L1648.2,1142.8 L1649.5,1141.7 L1650.7,1137.0 L1652.0,1135.4 L1653.2,1113.3 L1654.5,1113.5 L1655.4,1089.5 L1656.4,1079.0 L1657.6,1053.0 L1658.9,1049.2 L1659.8,1070.2" stroke="#9c9c9c" stroke-width="3.6" transform="translate(0.8,-4.5)"/>
<path d="M1745.0,1096.2 L1746.6,1154.2 L1747.9,1146.1 L1749.1,1129.1 L1750.1,1119.3 L1751.0,1094.7 L1751.9,1090.9 L1752.9,1066.5 L1753.8,1076.3 L1754.8,1104.1 L1756.0,1131.6 L1757.3,1147.9 L1758.2,1125.5 L1759.1,1094.7 L1760.4,1041.5 L1761.6,1006.9 L1762.6,1060.8 L1763.5,1094.7 L1764.5,1092.7 L1765.4,1066.5 L1766.7,1085.8 L1767.9,1119.7 L1769.2,1115.8 L1770.4,1088.4 L1771.4,1118.7 L1772.3,1154.2 L1773.6,1164.8 L1774.8,1176.1 L1776.1,1162.2 L1777.3,1122.9 L1778.3,1148.8 L1779.2,1157.3 L1780.1,1120.3 L1781.1,1100.9 L1783.0,938.0 L1784.2,826.8 L1786.1,1032.0 L1787.3,1187.1 L1788.6,1154.8 L1789.8,1126.0 L1790.8,1098.2 L1791.7,1069.6 L1793.0,1084.2 L1794.2,1107.2 L1795.5,1111.8 L1796.7,1132.3 L1798.0,1108.8 L1799.2,1094.7 L1800.5,1119.2 L1801.8,1132.3 L1802.7,1069.6 L1803.6,1032.0 L1804.9,928.0 L1806.8,1126.0 L1808.0,1074.1 L1809.3,1019.5 L1810.5,1027.3 L1811.8,1038.3 L1812.7,1085.3 L1813.7,1157.3 L1814.9,1113.8 L1816.2,1079.0 L1817.4,1119.8 L1818.7,1154.2 L1819.9,1129.5 L1821.2,1104.1 L1822.4,1116.2 L1823.7,1151.1 L1824.9,1138.6 L1826.2,1100.9 L1827.4,1114.7 L1828.7,1113.5 L1829.6,1114.0 L1830.6,1090.0 L1831.5,1117.3 L1832.5,1165.2 L1833.4,1123.8 L1834.3,1094.7 L1835.9,844.0 L1837.2,677.4 L1838.4,844.0 L1839.4,1152.6 L1841.9,1013.2 L1843.1,1026.3 L1844.4,1063.3 L1845.6,1061.2 L1846.9,1044.5 L1847.8,1030.7 L1848.8,1028.9 L1850.0,1033.3 L1851.3,1057.1 L1852.5,1058.2 L1853.8,1063.3 L1855.0,1094.4 L1856.3,1104.1 L1857.2,1127.3 L1858.2,1133.8 L1859.4,1111.1 L1860.7,1100.9 L1861.6,1041.7 L1862.5,1000.7 L1863.8,892.6 L1865.7,1129.1 L1866.9,1130.6 L1868.2,1110.3 L1869.4,1126.3 L1870.7,1138.5 L1871.9,1134.4 L1873.2,1119.7 L1874.1,1125.5 L1875.1,1152.6 L1876.3,1124.7 L1877.6,1119.7 L1878.8,1137.2 L1880.1,1144.8 L1881.3,1131.9 L1882.6,1122.9 L1883.8,1125.9 L1885.1,1151.1 L1886.4,1146.8 L1887.6,1119.7 L1889.2,1112.3 L1890.7,1097.8 L1892.0,1096.2 L1893.2,1079.0 L1894.5,1083.9 L1895.8,1110.3 L1897.0,1130.6 L1898.3,1132.3 L1899.2,1095.2 L1900.1,1080.6 L1901.4,1130.0 L1902.6,1160.5 L1903.9,1124.8 L1905.2,1091.5 L1906.4,1125.0 L1907.7,1166.7 L1908.9,1136.8 L1910.2,1104.1 L1911.4,1141.8 L1912.7,1157.3 L1913.6,1107.4 L1914.6,1069.6 L1915.8,1094.4 L1917.1,1138.5 L1918.3,1117.3 L1919.6,1094.7 L1920.5,1109.8 L1921.5,1138.5 L1922.4,1075.1 L1923.3,1032.0 L1924.3,1007.5 L1925.2,1000.7 L1926.2,1012.5 L1927.1,1047.7 L1928.3,1079.1 L1929.6,1126.0 L1930.5,1143.1 L1931.5,1169.9 L1932.7,1122.5 L1934.0,1085.3 L1935.2,1112.4 L1936.5,1126.0 L1937.7,1087.6 L1939.0,1060.2 L1940.3,1093.1 L1941.5,1126.0 L1942.8,1098.8 L1944.0,1088.4 L1945.3,1097.0 L1946.5,1113.5 L1947.8,1088.4 L1949.0,1088.4 L1950.3,1053.7 L1951.5,1032.0 L1952.8,1000.6 L1954.0,994.4 L1955.0,995.0 L1955.9,983.4 L1956.9,1024.7 L1957.8,1063.3 L1958.7,1102.3 L1959.7,1157.3 L1960.9,1155.9 L1962.2,1155.8 L1963.4,1131.8 L1964.7,1085.3 L1965.9,1065.6 L1967.2,1066.5 L1968.1,1124.9 L1969.1,1166.7 L1970.3,1144.6 L1971.6,1126.0 L1972.8,1094.5 L1974.1,1063.3 L1975.0,1041.5 L1976.0,1002.2 L1976.9,1045.7 L1977.9,1094.7 L1978.8,1134.0 L1979.7,1173.0 L1981.0,1154.4 L1982.2,1126.0 L1983.5,1151.1 L1984.7,1151.1 L1986.3,1118.8 L1987.9,1094.7 L1989.1,1126.8 L1990.4,1141.7 L1991.6,1115.7 L1992.9,1079.0 L1994.1,1110.7 L1995.4,1135.4 L1996.7,1111.0 L1997.9,1091.5 L1999.2,1103.2 L2000.4,1122.9 L2002.9,844.0 L2004.8,1119.7 L2006.1,1095.6 L2007.3,1094.7 L2008.6,1108.5 L2009.8,1141.7 L2011.1,1100.7 L2012.3,1082.1 L2013.6,1102.5 L2014.8,1110.3 L2016.1,1085.2 L2017.3,1072.7 L2018.6,1065.6 L2019.8,1075.9 L2021.1,1093.3 L2022.3,1132.3 L2023.6,1130.2 L2024.9,1110.3 L2025.8,1085.5 L2026.7,1041.4 L2027.7,994.1 L2028.6,938.0 L2030.2,750.0 L2031.1,276.0 L2032.1,750.0 L2033.6,1126.0 L2034.6,1139.1 L2035.5,1163.6 L2036.8,1138.1 L2038.0,1126.0 L2039.3,1109.7 L2040.5,1104.1 L2041.8,1114.0 L2043.0,1126.0 L2044.3,1107.7 L2045.5,1107.2 L2046.8,1116.8 L2048.0,1129.1 L2049.3,1097.9 L2050.5,1079.0 L2051.8,1103.5 L2053.1,1104.1 L2054.3,1098.3 L2055.6,1068.0 L2056.8,1104.5 L2058.1,1138.5 L2059.3,1135.0 L2060.6,1144.8 L2061.8,1164.7 L2063.1,1160.5 L2064.3,1122.6 L2065.6,1094.7 L2066.8,1117.6 L2068.1,1147.9 L2069.0,1128.7 L2070.0,1135.4 L2071.3,1124.5 L2072.5,1119.7 L2073.8,1107.3 L2075.0,1096.2 L2076.3,1115.9 L2077.5,1135.4 L2078.8,1133.9 L2080.0,1147.9 L2081.3,1137.1 L2082.5,1126.0 L2083.8,1105.3 L2085.0,1110.3 L2086.3,1119.9 L2087.5,1141.7 L2088.8,1120.0 L2090.1,1119.7 L2091.3,1128.1 L2092.6,1141.7 L2093.5,1140.7 L2094.4,1163.6 L2095.7,1115.2 L2096.9,1091.5 L2098.2,1119.4 L2099.5,1157.3 L2100.7,1144.1 L2102.0,1144.8 L2103.2,1129.8 L2104.5,1110.3 L2105.7,1125.2 L2107.0,1138.5 L2108.2,1124.7 L2109.5,1097.8 L2110.7,1083.7 L2112.0,1104.3 L2113.2,1116.6 L2114.5,1130.1 L2115.7,1132.3 L2117.0,1139.0 L2118.3,1126.0 L2119.2,1098.9 L2120.1,1077.4 L2121.4,1103.5 L2122.6,1138.5 L2123.9,1124.5 L2125.1,1085.3 L2126.4,1088.7 L2127.7,1110.3 L2128.6,1099.7 L2129.5,1077.4 L2130.8,1107.0 L2132.0,1129.1 L2133.3,1096.9 L2134.5,1088.4 L2135.8,1108.1 L2137.1,1110.3 L2138.3,1111.1 L2139.6,1091.5 L2140.8,1102.7 L2142.1,1107.2 L2143.3,1119.6 L2144.6,1119.7 L2145.8,1129.4 L2147.1,1122.9 L2148.3,1102.5 L2149.6,1100.9 L2150.8,1095.3 L2152.1,1088.4 L2153.3,1083.8 L2154.6,1079.0 L2155.9,1095.5 L2157.1,1094.7 L2158.4,1085.4 L2159.6,1060.2 L2160.6,1093.8 L2161.5,1110.3 L2162.7,1126.6 L2164.0,1138.5 L2165.3,1155.0 L2166.5,1151.1 L2167.8,1133.9 L2169.0,1107.2 L2170.3,1134.2 L2171.5,1151.1 L2172.8,1136.2 L2174.0,1135.4 L2175.3,1110.7 L2176.5,1110.3 L2177.8,1110.2 L2179.0,1129.1 L2180.0,1142.0 L2180.9,1162.0 L2182.2,1133.8 L2183.4,1126.0 L2184.7,1142.6 L2185.9,1141.7 L2186.9,1129.9 L2187.8,1115.0 L2189.1,1123.8 L2190.3,1126.0 L2191.6,1139.5 L2192.8,1146.4 L2194.1,1148.7 L2195.3,1141.7 L2196.3,1122.6 L2197.2,1104.1 L2198.5,1115.4 L2199.7,1152.6 L2201.0,1158.0 L2202.2,1147.9 L2203.5,1155.2 L2204.7,1149.5 L2205.7,1122.2 L2206.6,1094.7 L2207.6,1055.6 L2208.5,1014.8 L2209.4,1043.2 L2210.4,1063.3 L2211.3,1072.4 L2212.3,1104.1 L2213.2,1083.6 L2214.1,1050.8 L2215.1,1050.6 L2216.0,1063.3 L2217.3,1033.5 L2218.5,1025.7 L2219.8,1054.1 L2221.0,1094.7 L2222.3,1116.3 L2223.5,1126.0 L2224.8,1090.1 L2226.0,1069.6 L2227.3,1099.3 L2228.5,1116.6 L2229.8,1103.9 L2231.1,1066.5 L2232.0,1078.8 L2232.9,1091.5 L2234.2,1036.0 L2235.4,986.6 L2236.4,1032.2 L2237.3,1079.0 L2238.3,1121.4 L2239.2,1154.2 L2240.5,1159.6 L2241.7,1151.1 L2243.0,1152.5 L2244.2,1147.9 L2245.5,1140.7 L2246.7,1126.0 L2248.0,1107.2 L2249.2,1110.3 L2250.5,1074.5 L2251.7,1057.1 L2253.0,1044.4 L2254.2,1044.5 L2255.2,1049.3 L2256.1,1041.4 L2257.4,944.3 L2258.6,1063.3 L2259.6,1089.6 L2260.5,1126.0 L2261.5,1148.1 L2262.4,1166.7 L2263.3,1168.9 L2264.3,1196.5 L2265.5,1153.0 L2266.8,1132.3 L2268.0,1152.9 L2269.3,1185.5 L2270.9,1190.0 L2272.4,1185.5 L2273.7,1170.2 L2274.9,1144.8 L2276.2,1129.0 L2277.4,1104.1 L2278.7,1108.0 L2279.9,1122.9 L2281.2,1106.9 L2282.4,1090.0 L2283.7,1121.2 L2285.0,1154.2 L2286.2,1142.4 L2287.5,1132.3 L2288.7,1106.7 L2290.0,1100.9 L2291.2,1106.5 L2292.5,1091.5 L2293.7,1096.3 L2295.0,1116.6 L2296.2,1119.6 L2297.5,1097.8 L2298.7,1120.1 L2300.0,1119.7 L2300.9,1118.2 L2301.9,1141.7 L2303.1,1134.3 L2304.4,1129.1 L2305.6,1154.7 L2306.9,1163.6 L2308.1,1161.7 L2309.4,1135.4 L2310.6,1153.7 L2311.9,1174.6 L2313.2,1149.0 L2314.4,1135.4 L2315.7,1129.4 L2316.9,1138.5 L2318.5,1169.7 L2320.0,1177.7 L2321.3,1150.6 L2322.6,1138.5 L2323.8,1157.9 L2325.1,1173.0 L2326.3,1141.8 L2327.6,1129.1 L2328.8,1154.8 L2330.1,1179.3 L2331.3,1173.8 L2332.6,1144.8 L2333.8,1145.4 L2335.1,1165.2 L2336.3,1153.9 L2337.6,1126.0 L2338.8,1141.9 L2340.1,1157.3 L2341.4,1159.6 L2342.6,1141.7 L2343.9,1145.4 L2345.1,1138.5 L2346.4,1128.4 L2347.6,1132.3 L2348.9,1152.8 L2350.1,1152.6 L2351.4,1137.4 L2352.6,1122.9 L2353.9,1123.1 L2355.1,1147.9 L2356.4,1136.6 L2357.6,1151.1 L2358.9,1138.3 L2360.2,1126.0 L2361.4,1113.8 L2362.7,1104.1 L2363.9,1114.6 L2365.2,1126.1 L2366.4,1151.1 L2367.4,1118.8 L2368.3,1094.7 L2369.6,1105.6 L2370.8,1126.0 L2372.1,1106.7 L2373.3,1069.6 L2374.6,1053.5 L2375.8,1063.3 L2377.1,1062.8 L2378.3,1049.2 L2379.6,1082.3 L2380.8,1097.8 L2382.1,1069.1 L2383.3,1060.2 L2384.6,1093.2 L2385.8,1104.1 L2387.1,1098.6 L2388.4,1082.1 L2389.6,1114.5 L2390.9,1126.0 L2392.1,1112.7 L2393.4,1110.3 L2394.6,1061.6 L2395.9,1019.5 L2397.1,1032.4 L2398.4,1050.8 L2399.6,1051.2 L2400.9,1025.7 L2402.1,1054.7 L2403.4,1079.0 L2405.0,1087.9 L2406.5,1104.1 L2407.8,1064.6 L2409.0,1028.9 L2410.0,1040.3 L2410.9,1063.3 L2411.9,1020.3 L2412.8,1000.7 L2413.7,1033.4 L2414.7,1086.8 L2415.9,1096.3 L2417.2,1088.4 L2418.4,1057.8 L2419.7,1038.3 L2420.6,1084.1 L2421.6,1107.2 L2422.8,1085.8 L2424.1,1077.4 L2425.3,1089.4 L2426.6,1113.5 L2427.5,1095.0 L2428.5,1075.9 L2429.7,1135.4 L2431.0,1094.7 L2431.9,1082.1" stroke="#9c9c9c" stroke-width="3.6" transform="translate(0.8,-4.5)"/>
<path d="M2519.0,1213.1 L2520.1,1216.0 L2521.2,1226.3 L2522.8,1220.1 L2524.3,1216.9 L2525.9,1223.1 L2527.5,1218.4 L2529.0,1223.8 L2530.6,1220.0 L2532.2,1221.4 L2533.7,1215.3 L2535.3,1219.2 L2536.9,1220.0 L2538.4,1223.4 L2540.0,1216.9 L2541.6,1225.3 L2543.1,1223.1 L2544.4,1212.8 L2545.6,1201.2 L2546.6,1214.0 L2547.5,1221.6 L2548.8,1207.6 L2550.0,1204.3 L2551.3,1215.0 L2552.5,1220.0 L2554.1,1221.8 L2555.7,1224.7 L2557.2,1217.6 L2558.8,1204.3 L2560.4,1205.6 L2561.9,1200.7 L2563.5,1202.8 L2565.1,1198.9 L2566.6,1211.0 L2568.2,1207.5 L2569.8,1220.0 L2571.3,1209.3 L2572.9,1207.5 L2574.5,1210.3 L2576.0,1211.9 L2577.6,1216.9 L2579.2,1206.6 L2580.7,1201.2 L2582.3,1208.8 L2583.9,1210.6 L2585.4,1214.2 L2587.0,1203.6 L2588.6,1204.3 L2590.1,1208.3 L2591.7,1206.1 L2593.3,1210.6 L2594.8,1208.7 L2596.4,1204.1 L2598.0,1202.8 L2599.5,1209.8 L2601.1,1224.7 L2602.5,1213.9 L2603.8,1207.6 L2605.2,1204.3 L2606.8,1213.9 L2608.3,1213.7 L2609.9,1218.4 L2611.5,1223.1 L2612.7,1218.2 L2614.0,1224.9 L2615.2,1218.4 L2616.8,1224.9 L2618.3,1218.9 L2619.9,1220.0 L2621.5,1214.1 L2623.0,1216.9 L2624.6,1216.3 L2626.2,1223.1 L2627.7,1208.8 L2629.3,1202.4 L2630.9,1194.9 L2632.4,1197.9 L2634.0,1210.6 L2635.6,1205.9 L2637.1,1207.5 L2638.4,1197.1 L2639.7,1193.3 L2640.9,1184.9 L2642.5,1197.7 L2644.0,1201.2 L2645.3,1215.2 L2646.5,1223.1 L2648.1,1222.9 L2649.7,1224.7 L2650.9,1213.5 L2652.2,1204.3 L2653.4,1206.7 L2654.7,1207.0 L2655.9,1210.6 L2657.5,1208.1 L2659.1,1204.3 L2660.6,1209.0 L2662.2,1206.9 L2663.8,1215.7 L2665.3,1210.6 L2666.9,1204.6 L2668.5,1207.5 L2670.0,1205.9 L2671.6,1212.2 L2673.2,1215.3 L2674.7,1215.0 L2676.3,1202.5 L2677.9,1201.2 L2679.4,1204.7 L2681.0,1213.7 L2682.6,1204.5 L2684.1,1201.2 L2685.7,1201.1 L2687.3,1202.6 L2688.8,1204.3 L2690.4,1212.9 L2692.0,1210.6 L2693.5,1212.7 L2695.1,1210.9 L2696.7,1204.3 L2698.2,1201.2 L2699.8,1204.0 L2701.4,1212.2 L2702.9,1218.6 L2704.5,1220.0 L2706.1,1216.9 L2707.6,1204.3 L2709.2,1206.1 L2710.8,1209.6 L2712.3,1210.6 L2713.9,1202.5 L2715.5,1205.1 L2717.0,1204.3 L2718.6,1210.5 L2720.2,1210.3 L2721.7,1207.5 L2723.3,1207.0 L2724.9,1198.1 L2726.4,1210.0 L2728.0,1210.6 L2729.6,1204.5 L2731.1,1199.7 L2732.7,1201.2 L2734.3,1201.8 L2735.8,1210.6 L2737.4,1207.7 L2739.0,1204.3 L2740.5,1207.0 L2742.1,1210.7 L2743.7,1205.9" stroke="#9c9c9c" stroke-width="3.6" transform="translate(0.8,-4.5)"/>
<line x1="1136.4" y1="1102.1" x2="1215.5" y2="872.5" stroke="#e4e4e4" stroke-width="3.4" stroke-dasharray="20 7"/>
<circle cx="1132.4" cy="1099.6" r="6.2" stroke="#9c9c9c" stroke-width="3.2"/>
<circle cx="1219.5" cy="870.0" r="6.2" stroke="#9c9c9c" stroke-width="3.2"/>
<line x1="1500.6" y1="1093.7" x2="1575.6" y2="1120.0" stroke="#e4e4e4" stroke-width="3.4" stroke-dasharray="20 7"/>
<circle cx="1496.6" cy="1091.2" r="6.2" stroke="#9c9c9c" stroke-width="3.2"/>
<circle cx="1579.6" cy="1117.5" r="6.2" stroke="#9c9c9c" stroke-width="3.2"/>
<line x1="1663.8" y1="1066.7" x2="1741.0" y2="1092.7" stroke="#e4e4e4" stroke-width="3.4" stroke-dasharray="20 7"/>
<circle cx="1659.8" cy="1064.2" r="6.2" stroke="#9c9c9c" stroke-width="3.2"/>
<circle cx="1745.0" cy="1090.2" r="6.2" stroke="#9c9c9c" stroke-width="3.2"/>
<line x1="2435.9" y1="1078.6" x2="2515.0" y2="1209.6" stroke="#e4e4e4" stroke-width="3.4" stroke-dasharray="20 7"/>
<circle cx="2431.9" cy="1076.1" r="6.2" stroke="#9c9c9c" stroke-width="3.2"/>
<circle cx="2519.0" cy="1207.1" r="6.2" stroke="#9c9c9c" stroke-width="3.2"/>
<path d="M712.6,1241.0 L713.5,1215.7 L714.4,1199.6 L715.5,1200.0 L716.6,1218.4 L717.7,1220.0 L718.8,1213.7 L720.1,1207.3 L721.3,1223.1 L722.6,1227.2 L723.8,1229.4 L724.9,1225.1 L726.0,1227.8 L727.6,1219.5 L729.2,1234.1 L730.7,1237.7 L732.3,1241.0 L733.9,1227.1 L735.4,1237.2 L737.0,1233.2 L738.6,1232.5 L740.1,1241.0 L742.7,1229.8 L745.4,1230.4 L748.0,1241.0 L749.5,1225.4 L751.1,1213.7 L752.4,1173.7 L753.6,1116.6 L754.7,1142.9 L755.8,1188.7 L757.1,1197.1 L758.3,1220.0 L759.4,1220.2 L760.5,1213.7 L762.1,1233.2 L763.6,1229.4 L765.2,1228.3 L766.8,1223.1 L768.3,1241.0 L769.6,1227.8 L770.8,1220.0 L772.4,1237.1 L774.0,1229.4 L775.5,1211.4 L777.1,1216.9 L778.2,1230.9 L779.3,1226.3 L781.5,1094.7 L782.7,1097.0 L784.0,1110.3 L784.9,1044.7 L785.9,997.5 L786.8,986.0 L787.8,994.4 L789.0,1063.3 L790.3,1169.9 L791.2,1149.2 L792.1,1138.5 L793.1,1160.9 L794.0,1166.7 L795.3,1141.2 L796.5,1132.3 L797.5,1159.5 L798.4,1182.4 L799.4,1167.2 L800.3,1144.8 L801.5,1154.0 L802.8,1169.9 L804.1,1161.7 L805.3,1151.1 L806.6,1144.4 L807.8,1160.5 L809.1,1145.9 L810.3,1154.2 L811.6,1143.4 L812.8,1147.9 L814.1,1138.5 L815.3,1119.7 L816.6,1135.1 L817.8,1154.2 L819.1,1138.4 L820.3,1132.3 L821.6,1143.1 L822.9,1149.5 L824.1,1136.5 L825.4,1126.0 L826.6,1115.3 L827.9,1115.0 L829.4,1122.7 L831.0,1115.0 L832.3,1132.0 L833.5,1138.5 L834.4,1138.2 L835.4,1151.1 L836.6,1137.3 L837.9,1119.7 L839.1,1105.5 L840.4,1090.0 L842.0,1109.9 L843.5,1110.3 L844.8,1102.2 L846.0,1082.1 L847.1,1068.8 L848.2,1066.5 L849.3,1061.7 L850.4,1032.0 L851.4,1009.5 L852.3,1006.9 L853.2,1022.0 L854.2,1041.4 L855.1,1034.0 L856.1,1013.2 L857.3,1032.4 L858.6,1069.6 L859.7,1056.8 L860.8,1044.5 L861.9,1028.6 L863.0,1036.7 L864.2,1035.6 L865.5,1025.7 L866.6,1025.6 L867.7,1011.6 L869.2,1093.1 L870.5,1075.4 L871.7,1053.9 L873.0,1076.2 L874.2,1079.0 L875.3,1062.4 L876.4,1055.5 L878.0,1110.3 L878.9,1129.5 L879.9,1138.5 L880.8,1087.7 L881.8,1032.0 L882.7,944.3 L884.3,1000.7 L886.2,1129.1 L887.1,1106.2 L888.0,1079.0 L889.3,1085.7 L890.5,1094.7 L891.8,1123.9 L893.0,1135.4 L894.1,1154.0 L895.2,1149.5 L896.3,1137.1 L897.4,1126.0 L898.7,1120.9 L899.9,1107.2 L901.2,1106.8 L902.4,1129.1 L903.7,1126.5 L905.0,1113.5 L906.2,1104.8 L907.5,1088.4 L908.7,1099.7 L910.0,1085.3 L911.2,1103.0 L912.5,1104.1 L913.7,1106.3 L915.0,1119.7 L916.2,1101.1 L917.5,1088.4 L918.9,1092.0 L920.3,1086.8 L921.4,1094.0 L922.5,1126.0 L923.8,1128.9 L925.0,1133.8 L926.3,1105.6 L927.5,1094.7 L928.6,1100.4 L929.7,1126.0 L930.8,1087.9 L931.9,1072.7 L933.2,1068.7 L934.4,1050.8 L935.3,1063.1 L936.3,1094.7 L937.2,1107.7 L938.2,1133.8 L939.4,1072.3 L940.7,1016.3 L941.6,1049.5 L942.6,1063.3 L943.5,1037.6 L944.4,1033.6 L945.4,1056.5 L946.3,1082.1 L947.6,1057.6 L948.8,1030.4 L949.8,1072.5 L950.7,1094.7 L952.3,1129.6 L953.8,1147.9 L955.1,1132.3 L956.3,1097.8 L957.6,1112.4 L958.8,1138.5 L960.1,1114.4 L961.4,1094.7 L962.6,1103.5 L963.9,1119.7 L965.1,1125.0 L966.4,1110.3 L967.6,1108.1 L968.9,1082.1 L970.1,1063.7 L971.4,1063.3 L972.6,1083.1 L973.9,1119.7 L975.1,1093.2 L976.4,1080.6 L977.6,1094.0 L978.9,1121.3 L980.5,1107.6 L982.0,1094.7 L983.5,1112.7 L985.0,1119.8 L986.4,1141.7 L987.7,1082.1 L989.2,1083.3 L990.8,1110.3 L992.1,1098.8 L993.3,1088.1 L994.6,1082.1 L995.8,1094.8 L997.1,1104.1 L998.3,1108.0 L999.6,1088.4 L1000.8,1087.1 L1002.1,1075.9 L1003.3,1112.3 L1004.6,1147.9 L1005.8,1129.1 L1007.1,1104.1 L1008.4,1085.2 L1009.6,1057.1 L1010.5,1064.3 L1011.5,1094.7 L1012.4,1123.1 L1013.4,1130.7 L1014.6,1137.2 L1015.9,1129.1 L1017.1,1132.6 L1018.4,1116.6 L1019.6,1135.3 L1020.9,1138.5 L1022.1,1129.5 L1023.4,1126.0 L1024.6,1120.2 L1025.9,1119.7 L1027.2,1106.3 L1028.4,1113.5 L1029.7,1131.1 L1030.9,1141.7 L1032.2,1114.6 L1033.4,1110.3 L1034.7,1081.9 L1035.9,1075.9 L1037.2,1065.2 L1038.4,1069.6 L1039.4,1057.7 L1040.3,1063.3 L1041.3,1096.8 L1042.2,1138.5 L1043.1,1105.0 L1044.1,1094.7 L1045.0,1078.5 L1046.0,1088.4 L1046.9,1098.1 L1047.8,1126.0 L1049.1,1093.7 L1050.3,1082.1 L1051.6,1097.4 L1052.8,1119.7 L1054.1,1116.8 L1055.4,1138.5 L1056.6,1126.3 L1057.9,1094.7 L1059.7,917.6 L1061.6,1094.7 L1062.9,1094.5 L1064.1,1088.4 L1065.1,1112.2 L1066.0,1154.2 L1067.3,1122.7 L1068.5,1104.1 L1069.8,1134.6 L1071.0,1173.0 L1072.3,1146.0 L1073.5,1126.0 L1074.5,1102.1 L1075.4,1097.8 L1077.0,844.0 L1078.2,504.7 L1079.5,844.0 L1080.4,1144.8 L1081.7,1013.2 L1082.9,1059.9 L1084.2,1088.4 L1085.4,1069.9 L1086.7,1025.7 L1087.9,1037.4 L1089.2,1050.8 L1090.4,1056.7 L1091.7,1063.3 L1092.6,1046.3 L1093.6,1050.8 L1094.8,1062.4 L1096.1,1094.7 L1097.3,1112.5 L1098.6,1138.5 L1099.8,1135.6 L1101.1,1144.8 L1102.4,1147.1 L1103.6,1132.3 L1104.9,1147.0 L1106.1,1179.3 L1107.4,1182.5 L1108.6,1210.6 L1109.6,1187.9 L1110.5,1141.7 L1111.8,1170.6 L1113.0,1198.1 L1113.9,1162.3 L1114.9,1144.8 L1115.8,1178.8 L1116.8,1210.6 L1118.0,1184.2 L1119.3,1182.4 L1120.2,1158.1 L1121.2,1132.3 L1122.4,1160.4 L1123.7,1163.6 L1124.9,1166.8 L1126.2,1151.1 L1127.4,1135.8 L1128.7,1110.3 L1129.6,1091.6 L1130.6,1085.3 L1131.8,1104.1 L1132.4,1105.6" stroke="#ff00ff" stroke-width="3.9"/>
<path d="M1219.5,876.0 L1220.2,1104.1 L1221.4,1080.2 L1222.7,1063.3 L1223.6,1087.6 L1224.6,1129.1 L1225.8,1115.8 L1227.1,1088.4 L1228.0,1114.3 L1228.9,1138.5 L1230.2,1119.2 L1231.5,1085.3 L1232.4,1077.7 L1233.3,1079.0 L1234.3,1095.3 L1235.2,1126.0 L1236.5,1168.6 L1237.7,1194.9 L1239.0,1162.1 L1240.2,1104.1 L1241.5,1128.9 L1242.7,1135.4 L1243.7,1127.7 L1244.6,1104.1 L1246.5,826.8 L1248.4,1163.6 L1249.6,1186.8 L1250.9,1193.4 L1252.1,1165.9 L1253.4,1126.0 L1254.6,1081.3 L1255.9,1050.8 L1256.8,1085.7 L1257.8,1119.7 L1259.0,1108.2 L1260.3,1104.1 L1261.5,1110.6 L1262.8,1141.7 L1264.0,1112.2 L1265.3,1107.2 L1266.5,1114.0 L1267.8,1132.3 L1269.1,1100.9 L1270.3,1082.1 L1271.2,1071.5 L1272.2,1050.8 L1274.1,864.4 L1275.9,1138.5 L1277.2,1128.5 L1278.5,1094.7 L1279.7,1091.7 L1281.0,1091.5 L1282.2,1112.3 L1283.5,1110.3 L1284.7,1138.7 L1286.0,1141.7 L1287.2,1162.9 L1288.5,1160.5 L1289.7,1139.7 L1291.0,1126.0 L1292.2,1087.4 L1293.5,1063.3 L1294.4,1097.0 L1295.4,1144.8 L1296.6,1096.2 L1297.9,1063.3 L1300.4,891.0 L1302.3,1116.6 L1303.5,1087.0 L1304.8,1072.7 L1306.0,1094.8 L1307.3,1110.3 L1308.8,1081.6 L1310.4,1032.0 L1312.0,1023.6 L1313.5,997.5 L1314.5,1029.9 L1315.4,1063.3 L1316.7,1054.8 L1317.9,1038.3 L1319.2,1057.0 L1320.4,1060.2 L1321.7,1080.7 L1322.9,1122.9 L1324.2,1112.9 L1325.5,1094.7 L1326.7,919.2 L1328.6,1126.0 L1329.8,1150.8 L1331.1,1154.2 L1332.7,1162.3 L1334.2,1155.8 L1335.5,1147.4 L1336.7,1126.0 L1338.0,1122.3 L1339.2,1119.7 L1340.5,1128.6 L1341.7,1154.2 L1343.0,1133.5 L1344.3,1097.8 L1345.5,1107.6 L1346.8,1126.0 L1348.0,1141.7 L1349.3,1141.7 L1350.5,1129.7 L1351.8,1093.1 L1353.0,1106.8 L1354.3,1126.0 L1355.5,1103.9 L1356.8,1086.8 L1358.0,1118.0 L1359.3,1126.0 L1360.5,1117.8 L1361.8,1097.8 L1363.1,1114.3 L1364.3,1147.9 L1365.6,1111.6 L1366.8,1094.7 L1368.1,1121.6 L1369.3,1166.7 L1370.6,1127.1 L1371.8,1066.5 L1373.1,1115.2 L1374.3,1147.9 L1375.6,1137.2 L1376.8,1144.8 L1378.1,1128.2 L1379.3,1094.7 L1380.0,1141.7 L1380.9,1111.9 L1381.9,1057.1 L1382.8,1101.9 L1383.8,1138.5 L1385.0,1098.6 L1386.3,1066.5 L1388.8,944.3 L1390.7,1094.7 L1391.6,1086.5 L1392.5,1075.9 L1393.5,1118.8 L1394.4,1180.8 L1395.4,1117.3 L1396.3,1079.0 L1397.5,1106.9 L1398.8,1110.3 L1400.1,1122.1 L1401.3,1126.0 L1402.6,1112.6 L1403.8,1097.8 L1405.1,1124.7 L1406.3,1129.1 L1407.6,1107.1 L1408.8,1088.4 L1410.1,1116.9 L1411.3,1126.0 L1412.6,1125.1 L1413.8,1107.2 L1415.1,1113.8 L1416.3,1135.4 L1417.6,1113.3 L1418.9,1104.1 L1420.1,1117.5 L1421.4,1141.7 L1422.6,1140.4 L1423.9,1152.6 L1425.1,1154.1 L1426.4,1151.1 L1427.6,1140.1 L1428.9,1141.7 L1430.1,1138.0 L1431.4,1138.5 L1432.6,1099.2 L1433.9,1079.0 L1435.1,1067.7 L1436.4,1035.1 L1437.3,1076.8 L1438.3,1126.0 L1439.2,1164.1 L1440.2,1204.3 L1441.7,875.3 L1443.0,730.7 L1444.2,875.3 L1445.2,1191.8 L1446.4,1189.3 L1447.7,1182.4 L1448.9,1186.7 L1450.2,1169.9 L1451.4,1145.9 L1452.7,1126.0 L1453.9,1124.3 L1455.2,1100.9 L1456.5,1121.3 L1457.7,1141.7 L1459.0,1115.9 L1460.2,1088.4 L1461.5,1109.4 L1462.7,1129.1 L1464.0,1091.6 L1465.2,1079.0 L1466.5,1107.2 L1467.7,1138.5 L1470.2,931.7 L1472.1,1138.5 L1473.4,1106.8 L1474.6,1091.5 L1475.9,1100.6 L1477.1,1135.4 L1478.4,1122.8 L1479.6,1094.7 L1480.9,1095.6 L1482.1,1113.5 L1483.1,1087.7 L1484.0,1063.3 L1485.3,1049.6 L1486.5,1024.2 L1487.5,1060.9 L1488.4,1094.7 L1489.7,1152.6 L1490.9,1141.1 L1492.2,1138.5 L1493.4,1121.8 L1494.7,1104.1 L1495.6,1102.1 L1496.6,1097.2" stroke="#ff00ff" stroke-width="3.9"/>
<path d="M1579.6,1123.5 L1580.9,1138.4 L1582.1,1138.5 L1583.2,1137.7 L1584.3,1157.3 L1585.2,1162.0 L1586.2,1163.6 L1587.1,1122.6 L1588.1,1094.7 L1589.0,1030.1 L1589.9,977.2 L1591.8,1110.3 L1593.1,1137.8 L1594.3,1151.1 L1595.3,1115.2 L1596.2,1079.0 L1597.5,1116.6 L1598.7,1151.1 L1599.7,1114.0 L1600.6,1063.3 L1602.5,853.4 L1604.4,1126.0 L1605.3,1105.4 L1606.2,1063.3 L1607.5,1038.4 L1608.7,1016.3 L1610.0,1031.8 L1611.2,1041.4 L1612.5,1029.0 L1613.8,1016.3 L1614.7,1066.0 L1615.6,1115.0 L1616.9,1092.6 L1618.1,1060.2 L1619.4,1103.6 L1620.6,1149.5 L1622.2,1150.4 L1623.8,1149.5 L1625.0,1149.7 L1626.3,1151.1 L1627.2,1134.4 L1628.2,1094.7 L1629.1,1081.8 L1630.0,1058.6 L1631.0,1086.4 L1631.9,1094.7 L1633.2,1095.2 L1634.4,1072.7 L1635.7,1093.1 L1636.9,1126.0 L1638.2,1157.3 L1639.4,1185.5 L1640.7,1198.6 L1642.0,1188.7 L1643.2,1186.5 L1644.5,1166.7 L1645.7,1155.7 L1647.0,1163.6 L1648.2,1142.8 L1649.5,1141.7 L1650.7,1137.0 L1652.0,1135.4 L1653.2,1113.3 L1654.5,1113.5 L1655.4,1089.5 L1656.4,1079.0 L1657.6,1053.0 L1658.9,1049.2 L1659.8,1070.2" stroke="#ff00ff" stroke-width="3.9"/>
<path d="M1745.0,1096.2 L1746.6,1154.2 L1747.9,1146.1 L1749.1,1129.1 L1750.1,1119.3 L1751.0,1094.7 L1751.9,1090.9 L1752.9,1066.5 L1753.8,1076.3 L1754.8,1104.1 L1756.0,1131.6 L1757.3,1147.9 L1758.2,1125.5 L1759.1,1094.7 L1760.4,1041.5 L1761.6,1006.9 L1762.6,1060.8 L1763.5,1094.7 L1764.5,1092.7 L1765.4,1066.5 L1766.7,1085.8 L1767.9,1119.7 L1769.2,1115.8 L1770.4,1088.4 L1771.4,1118.7 L1772.3,1154.2 L1773.6,1164.8 L1774.8,1176.1 L1776.1,1162.2 L1777.3,1122.9 L1778.3,1148.8 L1779.2,1157.3 L1780.1,1120.3 L1781.1,1100.9 L1783.0,938.0 L1784.2,826.8 L1786.1,1032.0 L1787.3,1187.1 L1788.6,1154.8 L1789.8,1126.0 L1790.8,1098.2 L1791.7,1069.6 L1793.0,1084.2 L1794.2,1107.2 L1795.5,1111.8 L1796.7,1132.3 L1798.0,1108.8 L1799.2,1094.7 L1800.5,1119.2 L1801.8,1132.3 L1802.7,1069.6 L1803.6,1032.0 L1804.9,928.0 L1806.8,1126.0 L1808.0,1074.1 L1809.3,1019.5 L1810.5,1027.3 L1811.8,1038.3 L1812.7,1085.3 L1813.7,1157.3 L1814.9,1113.8 L1816.2,1079.0 L1817.4,1119.8 L1818.7,1154.2 L1819.9,1129.5 L1821.2,1104.1 L1822.4,1116.2 L1823.7,1151.1 L1824.9,1138.6 L1826.2,1100.9 L1827.4,1114.7 L1828.7,1113.5 L1829.6,1114.0 L1830.6,1090.0 L1831.5,1117.3 L1832.5,1165.2 L1833.4,1123.8 L1834.3,1094.7 L1835.9,844.0 L1837.2,677.4 L1838.4,844.0 L1839.4,1152.6 L1841.9,1013.2 L1843.1,1026.3 L1844.4,1063.3 L1845.6,1061.2 L1846.9,1044.5 L1847.8,1030.7 L1848.8,1028.9 L1850.0,1033.3 L1851.3,1057.1 L1852.5,1058.2 L1853.8,1063.3 L1855.0,1094.4 L1856.3,1104.1 L1857.2,1127.3 L1858.2,1133.8 L1859.4,1111.1 L1860.7,1100.9 L1861.6,1041.7 L1862.5,1000.7 L1863.8,892.6 L1865.7,1129.1 L1866.9,1130.6 L1868.2,1110.3 L1869.4,1126.3 L1870.7,1138.5 L1871.9,1134.4 L1873.2,1119.7 L1874.1,1125.5 L1875.1,1152.6 L1876.3,1124.7 L1877.6,1119.7 L1878.8,1137.2 L1880.1,1144.8 L1881.3,1131.9 L1882.6,1122.9 L1883.8,1125.9 L1885.1,1151.1 L1886.4,1146.8 L1887.6,1119.7 L1889.2,1112.3 L1890.7,1097.8 L1892.0,1096.2 L1893.2,1079.0 L1894.5,1083.9 L1895.8,1110.3 L1897.0,1130.6 L1898.3,1132.3 L1899.2,1095.2 L1900.1,1080.6 L1901.4,1130.0 L1902.6,1160.5 L1903.9,1124.8 L1905.2,1091.5 L1906.4,1125.0 L1907.7,1166.7 L1908.9,1136.8 L1910.2,1104.1 L1911.4,1141.8 L1912.7,1157.3 L1913.6,1107.4 L1914.6,1069.6 L1915.8,1094.4 L1917.1,1138.5 L1918.3,1117.3 L1919.6,1094.7 L1920.5,1109.8 L1921.5,1138.5 L1922.4,1075.1 L1923.3,1032.0 L1924.3,1007.5 L1925.2,1000.7 L1926.2,1012.5 L1927.1,1047.7 L1928.3,1079.1 L1929.6,1126.0 L1930.5,1143.1 L1931.5,1169.9 L1932.7,1122.5 L1934.0,1085.3 L1935.2,1112.4 L1936.5,1126.0 L1937.7,1087.6 L1939.0,1060.2 L1940.3,1093.1 L1941.5,1126.0 L1942.8,1098.8 L1944.0,1088.4 L1945.3,1097.0 L1946.5,1113.5 L1947.8,1088.4 L1949.0,1088.4 L1950.3,1053.7 L1951.5,1032.0 L1952.8,1000.6 L1954.0,994.4 L1955.0,995.0 L1955.9,983.4 L1956.9,1024.7 L1957.8,1063.3 L1958.7,1102.3 L1959.7,1157.3 L1960.9,1155.9 L1962.2,1155.8 L1963.4,1131.8 L1964.7,1085.3 L1965.9,1065.6 L1967.2,1066.5 L1968.1,1124.9 L1969.1,1166.7 L1970.3,1144.6 L1971.6,1126.0 L1972.8,1094.5 L1974.1,1063.3 L1975.0,1041.5 L1976.0,1002.2 L1976.9,1045.7 L1977.9,1094.7 L1978.8,1134.0 L1979.7,1173.0 L1981.0,1154.4 L1982.2,1126.0 L1983.5,1151.1 L1984.7,1151.1 L1986.3,1118.8 L1987.9,1094.7 L1989.1,1126.8 L1990.4,1141.7 L1991.6,1115.7 L1992.9,1079.0 L1994.1,1110.7 L1995.4,1135.4 L1996.7,1111.0 L1997.9,1091.5 L1999.2,1103.2 L2000.4,1122.9 L2002.9,844.0 L2004.8,1119.7 L2006.1,1095.6 L2007.3,1094.7 L2008.6,1108.5 L2009.8,1141.7 L2011.1,1100.7 L2012.3,1082.1 L2013.6,1102.5 L2014.8,1110.3 L2016.1,1085.2 L2017.3,1072.7 L2018.6,1065.6 L2019.8,1075.9 L2021.1,1093.3 L2022.3,1132.3 L2023.6,1130.2 L2024.9,1110.3 L2025.8,1085.5 L2026.7,1041.4 L2027.7,994.1 L2028.6,938.0 L2030.2,750.0 L2031.1,276.0 L2032.1,750.0 L2033.6,1126.0 L2034.6,1139.1 L2035.5,1163.6 L2036.8,1138.1 L2038.0,1126.0 L2039.3,1109.7 L2040.5,1104.1 L2041.8,1114.0 L2043.0,1126.0 L2044.3,1107.7 L2045.5,1107.2 L2046.8,1116.8 L2048.0,1129.1 L2049.3,1097.9 L2050.5,1079.0 L2051.8,1103.5 L2053.1,1104.1 L2054.3,1098.3 L2055.6,1068.0 L2056.8,1104.5 L2058.1,1138.5 L2059.3,1135.0 L2060.6,1144.8 L2061.8,1164.7 L2063.1,1160.5 L2064.3,1122.6 L2065.6,1094.7 L2066.8,1117.6 L2068.1,1147.9 L2069.0,1128.7 L2070.0,1135.4 L2071.3,1124.5 L2072.5,1119.7 L2073.8,1107.3 L2075.0,1096.2 L2076.3,1115.9 L2077.5,1135.4 L2078.8,1133.9 L2080.0,1147.9 L2081.3,1137.1 L2082.5,1126.0 L2083.8,1105.3 L2085.0,1110.3 L2086.3,1119.9 L2087.5,1141.7 L2088.8,1120.0 L2090.1,1119.7 L2091.3,1128.1 L2092.6,1141.7 L2093.5,1140.7 L2094.4,1163.6 L2095.7,1115.2 L2096.9,1091.5 L2098.2,1119.4 L2099.5,1157.3 L2100.7,1144.1 L2102.0,1144.8 L2103.2,1129.8 L2104.5,1110.3 L2105.7,1125.2 L2107.0,1138.5 L2108.2,1124.7 L2109.5,1097.8 L2110.7,1083.7 L2112.0,1104.3 L2113.2,1116.6 L2114.5,1130.1 L2115.7,1132.3 L2117.0,1139.0 L2118.3,1126.0 L2119.2,1098.9 L2120.1,1077.4 L2121.4,1103.5 L2122.6,1138.5 L2123.9,1124.5 L2125.1,1085.3 L2126.4,1088.7 L2127.7,1110.3 L2128.6,1099.7 L2129.5,1077.4 L2130.8,1107.0 L2132.0,1129.1 L2133.3,1096.9 L2134.5,1088.4 L2135.8,1108.1 L2137.1,1110.3 L2138.3,1111.1 L2139.6,1091.5 L2140.8,1102.7 L2142.1,1107.2 L2143.3,1119.6 L2144.6,1119.7 L2145.8,1129.4 L2147.1,1122.9 L2148.3,1102.5 L2149.6,1100.9 L2150.8,1095.3 L2152.1,1088.4 L2153.3,1083.8 L2154.6,1079.0 L2155.9,1095.5 L2157.1,1094.7 L2158.4,1085.4 L2159.6,1060.2 L2160.6,1093.8 L2161.5,1110.3 L2162.7,1126.6 L2164.0,1138.5 L2165.3,1155.0 L2166.5,1151.1 L2167.8,1133.9 L2169.0,1107.2 L2170.3,1134.2 L2171.5,1151.1 L2172.8,1136.2 L2174.0,1135.4 L2175.3,1110.7 L2176.5,1110.3 L2177.8,1110.2 L2179.0,1129.1 L2180.0,1142.0 L2180.9,1162.0 L2182.2,1133.8 L2183.4,1126.0 L2184.7,1142.6 L2185.9,1141.7 L2186.9,1129.9 L2187.8,1115.0 L2189.1,1123.8 L2190.3,1126.0 L2191.6,1139.5 L2192.8,1146.4 L2194.1,1148.7 L2195.3,1141.7 L2196.3,1122.6 L2197.2,1104.1 L2198.5,1115.4 L2199.7,1152.6 L2201.0,1158.0 L2202.2,1147.9 L2203.5,1155.2 L2204.7,1149.5 L2205.7,1122.2 L2206.6,1094.7 L2207.6,1055.6 L2208.5,1014.8 L2209.4,1043.2 L2210.4,1063.3 L2211.3,1072.4 L2212.3,1104.1 L2213.2,1083.6 L2214.1,1050.8 L2215.1,1050.6 L2216.0,1063.3 L2217.3,1033.5 L2218.5,1025.7 L2219.8,1054.1 L2221.0,1094.7 L2222.3,1116.3 L2223.5,1126.0 L2224.8,1090.1 L2226.0,1069.6 L2227.3,1099.3 L2228.5,1116.6 L2229.8,1103.9 L2231.1,1066.5 L2232.0,1078.8 L2232.9,1091.5 L2234.2,1036.0 L2235.4,986.6 L2236.4,1032.2 L2237.3,1079.0 L2238.3,1121.4 L2239.2,1154.2 L2240.5,1159.6 L2241.7,1151.1 L2243.0,1152.5 L2244.2,1147.9 L2245.5,1140.7 L2246.7,1126.0 L2248.0,1107.2 L2249.2,1110.3 L2250.5,1074.5 L2251.7,1057.1 L2253.0,1044.4 L2254.2,1044.5 L2255.2,1049.3 L2256.1,1041.4 L2257.4,944.3 L2258.6,1063.3 L2259.6,1089.6 L2260.5,1126.0 L2261.5,1148.1 L2262.4,1166.7 L2263.3,1168.9 L2264.3,1196.5 L2265.5,1153.0 L2266.8,1132.3 L2268.0,1152.9 L2269.3,1185.5 L2270.9,1190.0 L2272.4,1185.5 L2273.7,1170.2 L2274.9,1144.8 L2276.2,1129.0 L2277.4,1104.1 L2278.7,1108.0 L2279.9,1122.9 L2281.2,1106.9 L2282.4,1090.0 L2283.7,1121.2 L2285.0,1154.2 L2286.2,1142.4 L2287.5,1132.3 L2288.7,1106.7 L2290.0,1100.9 L2291.2,1106.5 L2292.5,1091.5 L2293.7,1096.3 L2295.0,1116.6 L2296.2,1119.6 L2297.5,1097.8 L2298.7,1120.1 L2300.0,1119.7 L2300.9,1118.2 L2301.9,1141.7 L2303.1,1134.3 L2304.4,1129.1 L2305.6,1154.7 L2306.9,1163.6 L2308.1,1161.7 L2309.4,1135.4 L2310.6,1153.7 L2311.9,1174.6 L2313.2,1149.0 L2314.4,1135.4 L2315.7,1129.4 L2316.9,1138.5 L2318.5,1169.7 L2320.0,1177.7 L2321.3,1150.6 L2322.6,1138.5 L2323.8,1157.9 L2325.1,1173.0 L2326.3,1141.8 L2327.6,1129.1 L2328.8,1154.8 L2330.1,1179.3 L2331.3,1173.8 L2332.6,1144.8 L2333.8,1145.4 L2335.1,1165.2 L2336.3,1153.9 L2337.6,1126.0 L2338.8,1141.9 L2340.1,1157.3 L2341.4,1159.6 L2342.6,1141.7 L2343.9,1145.4 L2345.1,1138.5 L2346.4,1128.4 L2347.6,1132.3 L2348.9,1152.8 L2350.1,1152.6 L2351.4,1137.4 L2352.6,1122.9 L2353.9,1123.1 L2355.1,1147.9 L2356.4,1136.6 L2357.6,1151.1 L2358.9,1138.3 L2360.2,1126.0 L2361.4,1113.8 L2362.7,1104.1 L2363.9,1114.6 L2365.2,1126.1 L2366.4,1151.1 L2367.4,1118.8 L2368.3,1094.7 L2369.6,1105.6 L2370.8,1126.0 L2372.1,1106.7 L2373.3,1069.6 L2374.6,1053.5 L2375.8,1063.3 L2377.1,1062.8 L2378.3,1049.2 L2379.6,1082.3 L2380.8,1097.8 L2382.1,1069.1 L2383.3,1060.2 L2384.6,1093.2 L2385.8,1104.1 L2387.1,1098.6 L2388.4,1082.1 L2389.6,1114.5 L2390.9,1126.0 L2392.1,1112.7 L2393.4,1110.3 L2394.6,1061.6 L2395.9,1019.5 L2397.1,1032.4 L2398.4,1050.8 L2399.6,1051.2 L2400.9,1025.7 L2402.1,1054.7 L2403.4,1079.0 L2405.0,1087.9 L2406.5,1104.1 L2407.8,1064.6 L2409.0,1028.9 L2410.0,1040.3 L2410.9,1063.3 L2411.9,1020.3 L2412.8,1000.7 L2413.7,1033.4 L2414.7,1086.8 L2415.9,1096.3 L2417.2,1088.4 L2418.4,1057.8 L2419.7,1038.3 L2420.6,1084.1 L2421.6,1107.2 L2422.8,1085.8 L2424.1,1077.4 L2425.3,1089.4 L2426.6,1113.5 L2427.5,1095.0 L2428.5,1075.9 L2429.7,1135.4 L2431.0,1094.7 L2431.9,1082.1" stroke="#ff00ff" stroke-width="3.9"/>
<path d="M2519.0,1213.1 L2520.1,1216.0 L2521.2,1226.3 L2522.8,1220.1 L2524.3,1216.9 L2525.9,1223.1 L2527.5,1218.4 L2529.0,1223.8 L2530.6,1220.0 L2532.2,1221.4 L2533.7,1215.3 L2535.3,1219.2 L2536.9,1220.0 L2538.4,1223.4 L2540.0,1216.9 L2541.6,1225.3 L2543.1,1223.1 L2544.4,1212.8 L2545.6,1201.2 L2546.6,1214.0 L2547.5,1221.6 L2548.8,1207.6 L2550.0,1204.3 L2551.3,1215.0 L2552.5,1220.0 L2554.1,1221.8 L2555.7,1224.7 L2557.2,1217.6 L2558.8,1204.3 L2560.4,1205.6 L2561.9,1200.7 L2563.5,1202.8 L2565.1,1198.9 L2566.6,1211.0 L2568.2,1207.5 L2569.8,1220.0 L2571.3,1209.3 L2572.9,1207.5 L2574.5,1210.3 L2576.0,1211.9 L2577.6,1216.9 L2579.2,1206.6 L2580.7,1201.2 L2582.3,1208.8 L2583.9,1210.6 L2585.4,1214.2 L2587.0,1203.6 L2588.6,1204.3 L2590.1,1208.3 L2591.7,1206.1 L2593.3,1210.6 L2594.8,1208.7 L2596.4,1204.1 L2598.0,1202.8 L2599.5,1209.8 L2601.1,1224.7 L2602.5,1213.9 L2603.8,1207.6 L2605.2,1204.3 L2606.8,1213.9 L2608.3,1213.7 L2609.9,1218.4 L2611.5,1223.1 L2612.7,1218.2 L2614.0,1224.9 L2615.2,1218.4 L2616.8,1224.9 L2618.3,1218.9 L2619.9,1220.0 L2621.5,1214.1 L2623.0,1216.9 L2624.6,1216.3 L2626.2,1223.1 L2627.7,1208.8 L2629.3,1202.4 L2630.9,1194.9 L2632.4,1197.9 L2634.0,1210.6 L2635.6,1205.9 L2637.1,1207.5 L2638.4,1197.1 L2639.7,1193.3 L2640.9,1184.9 L2642.5,1197.7 L2644.0,1201.2 L2645.3,1215.2 L2646.5,1223.1 L2648.1,1222.9 L2649.7,1224.7 L2650.9,1213.5 L2652.2,1204.3 L2653.4,1206.7 L2654.7,1207.0 L2655.9,1210.6 L2657.5,1208.1 L2659.1,1204.3 L2660.6,1209.0 L2662.2,1206.9 L2663.8,1215.7 L2665.3,1210.6 L2666.9,1204.6 L2668.5,1207.5 L2670.0,1205.9 L2671.6,1212.2 L2673.2,1215.3 L2674.7,1215.0 L2676.3,1202.5 L2677.9,1201.2 L2679.4,1204.7 L2681.0,1213.7 L2682.6,1204.5 L2684.1,1201.2 L2685.7,1201.1 L2687.3,1202.6 L2688.8,1204.3 L2690.4,1212.9 L2692.0,1210.6 L2693.5,1212.7 L2695.1,1210.9 L2696.7,1204.3 L2698.2,1201.2 L2699.8,1204.0 L2701.4,1212.2 L2702.9,1218.6 L2704.5,1220.0 L2706.1,1216.9 L2707.6,1204.3 L2709.2,1206.1 L2710.8,1209.6 L2712.3,1210.6 L2713.9,1202.5 L2715.5,1205.1 L2717.0,1204.3 L2718.6,1210.5 L2720.2,1210.3 L2721.7,1207.5 L2723.3,1207.0 L2724.9,1198.1 L2726.4,1210.0 L2728.0,1210.6 L2729.6,1204.5 L2731.1,1199.7 L2732.7,1201.2 L2734.3,1201.8 L2735.8,1210.6 L2737.4,1207.7 L2739.0,1204.3 L2740.5,1207.0 L2742.1,1210.7 L2743.7,1205.9" stroke="#ff00ff" stroke-width="3.9"/>
<line x1="1136.4" y1="1105.6" x2="1215.5" y2="876.0" stroke="#f0b8f0" stroke-width="3.6" stroke-dasharray="20 7"/>
<circle cx="1132.4" cy="1105.6" r="6.2" stroke="#ff00ff" stroke-width="3.2"/>
<circle cx="1219.5" cy="876.0" r="6.2" stroke="#ff00ff" stroke-width="3.2"/>
<line x1="1500.6" y1="1097.2" x2="1575.6" y2="1123.5" stroke="#f0b8f0" stroke-width="3.6" stroke-dasharray="20 7"/>
<circle cx="1496.6" cy="1097.2" r="6.2" stroke="#ff00ff" stroke-width="3.2"/>
<circle cx="1579.6" cy="1123.5" r="6.2" stroke="#ff00ff" stroke-width="3.2"/>
<line x1="1663.8" y1="1070.2" x2="1741.0" y2="1096.2" stroke="#f0b8f0" stroke-width="3.6" stroke-dasharray="20 7"/>
<circle cx="1659.8" cy="1070.2" r="6.2" stroke="#ff00ff" stroke-width="3.2"/>
<circle cx="1745.0" cy="1096.2" r="6.2" stroke="#ff00ff" stroke-width="3.2"/>
<line x1="2435.9" y1="1082.1" x2="2515.0" y2="1213.1" stroke="#f0b8f0" stroke-width="3.6" stroke-dasharray="20 7"/>
<circle cx="2431.9" cy="1082.1" r="6.2" stroke="#ff00ff" stroke-width="3.2"/>
<circle cx="2519.0" cy="1213.1" r="6.2" stroke="#ff00ff" stroke-width="3.2"/>
<path d="M782.7,1241.0 L783.4,1063.3 L784.0,970.9 L785.6,953.7 L786.5,875.3 L787.8,814.2 L789.0,806.4 L790.9,797.0 L792.8,786.0 L794.7,787.0 L796.5,801.7 L799.0,806.4 L801.5,798.6 L803.4,815.2 L805.9,801.7 L808.4,809.5 L810.3,797.6 L812.2,797.0 L814.7,817.4 L816.6,801.7 L819.1,811.1 L821.6,809.5 L824.1,816.7 L827.9,817.4 L829.7,824.6 L831.6,817.4 L833.5,823.6 L834.8,809.5 L837.3,808.0 L837.9,750.0 L839.8,731.3 L842.6,637.3 L846.0,636.6 L847.6,576.2 L849.2,575.2 L851.4,555.8 L852.9,548.0 L855.1,527.0 L856.4,526.4 L858.3,504.1 L860.8,502.5 L863.3,497.8 L864.8,495.6 L866.1,498.2 L867.0,496.3 L868.0,471.2 L868.6,436.7 L871.1,421.1 L873.3,410.7 L875.5,409.2 L877.4,409.5 L878.0,417.9 L878.0,537.0 L878.3,631.0 L878.9,755.1 L879.9,1000.7 L881.1,1004.4 L882.4,1003.8 L883.3,875.3 L883.6,750.0 L884.3,631.0 L884.9,535.4 L886.2,535.4 L886.8,631.0 L887.4,755.1 L887.7,875.3 L888.0,1000.7 L889.3,1001.6 L891.8,1000.7 L893.7,991.3 L895.6,995.0 L896.8,988.1 L899.3,985.0 L903.1,984.4 L905.0,969.3 L906.8,978.7 L908.7,985.0 L911.2,974.0 L913.1,981.2 L915.6,980.3 L921.9,981.9 L924.4,992.8 L926.3,981.9 L928.1,991.9 L930.6,984.4 L933.2,983.4 L934.4,938.0 L935.0,895.7 L936.9,928.6 L938.8,932.4 L940.7,982.5 L941.3,925.5 L942.6,906.7 L944.4,903.5 L946.3,891.0 L946.9,844.0 L947.6,750.0 L948.8,737.5 L950.1,631.0 L951.3,455.5 L952.6,449.3 L955.7,414.8 L959.5,386.6 L963.2,366.2 L965.7,357.8 L967.9,356.2 L970.4,360.6 L973.6,360.9 L976.7,356.8 L979.8,350.6 L983.0,346.8 L986.1,342.7 L990.2,338.0 L993.9,329.6 L997.1,319.2 L1000.2,306.7 L1003.3,289.5 L1005.5,278.5 L1007.1,276.0 L1009.0,279.4 L1011.2,280.1 L1012.7,283.8 L1026.8,283.8 L1028.4,286.3 L1030.0,283.8 L1032.2,283.8 L1033.1,295.7 L1034.7,311.4 L1036.2,320.8 L1037.8,321.4 L1039.4,360.9 L1043.1,361.5 L1044.1,474.3 L1044.4,755.1 L1044.7,1241.0 L1049.1,1241.0 L1049.4,755.1 L1049.7,537.0 L1050.3,432.0 L1051.9,428.9 L1053.5,417.9 L1056.6,402.3 L1059.7,394.4 L1061.3,386.6 L1062.9,370.9 L1065.4,349.0 L1067.6,308.3 L1069.1,286.3 L1070.4,283.2 L1071.6,283.8 L1072.9,308.3 L1074.8,327.1 L1076.7,329.6 L1078.5,360.0 L1080.4,361.5 L1082.3,386.6 L1083.2,392.9 L1084.2,386.0 L1085.4,397.6 L1087.3,411.7 L1088.6,413.9 L1092.6,414.2 L1094.2,430.5 L1095.5,469.6 L1096.7,474.3 L1098.0,461.8 L1099.8,449.3 L1101.7,434.5 L1103.0,449.3 L1104.2,461.8 L1105.5,463.4 L1106.1,537.0 L1106.7,710.9 L1108.0,712.5 L1109.9,709.3 L1111.8,715.6 L1113.6,717.2 L1116.1,731.3 L1118.0,743.8 L1119.3,755.1 L1119.9,793.9 L1121.8,794.5 L1123.7,859.7 L1125.5,864.4 L1127.4,900.4 L1129.3,919.2 L1131.2,927.0 L1132.4,928.6 L1133.7,960.6" stroke="#800000" stroke-width="1.6" stroke-linejoin="round"/>
<path d="M1219.5,389.7 L1221.7,392.9 L1223.0,443.0 L1224.2,486.2 L1226.4,479.0 L1230.5,474.3 L1232.1,468.1 L1233.6,450.8 L1235.5,450.2 L1236.2,521.3 L1237.1,615.3 L1238.3,693.7 L1239.0,755.1 L1239.0,797.0 L1240.9,817.4 L1242.1,820.5 L1244.0,812.7 L1245.9,793.9 L1247.7,786.0 L1249.6,753.1 L1250.9,750.1 L1253.4,718.7 L1255.0,693.7 L1255.9,458.7 L1257.8,430.5 L1259.7,402.3 L1263.4,401.3 L1265.9,388.2 L1267.8,381.3 L1269.7,381.9 L1271.6,388.2 L1273.4,389.7 L1275.3,405.4 L1276.6,409.2 L1279.1,409.2 L1281.0,417.3 L1284.4,417.3 L1286.3,410.1 L1287.9,409.5 L1289.7,417.3 L1291.6,418.6 L1293.5,452.4 L1294.7,446.8 L1296.0,458.7 L1297.3,474.3 L1299.1,475.9 L1300.4,527.0 L1302.3,527.0 L1304.1,491.6 L1306.0,490.0 L1307.9,411.7 L1310.4,358.4 L1312.0,349.0 L1313.5,352.1 L1315.4,353.7 L1316.7,380.3 L1318.6,396.0 L1321.4,397.6 L1323.6,430.5 L1326.1,458.7 L1328.0,521.3 L1329.2,580.9 L1331.1,587.8 L1333.6,585.6 L1336.1,576.2 L1338.0,544.8 L1339.9,543.3 L1341.7,523.8 L1344.9,522.9 L1346.8,496.3 L1348.0,443.0 L1349.3,377.2 L1351.1,375.6 L1353.0,349.0 L1354.9,340.5 L1356.8,340.2 L1358.7,358.4 L1360.5,388.2 L1363.1,390.4 L1364.9,411.7 L1365.9,537.0 L1366.5,755.1 L1366.8,1241.0 L1368.4,1241.0 L1369.3,755.1 L1369.6,620.0 L1370.3,620.0 L1370.9,755.1 L1371.8,844.0 L1373.1,953.7 L1375.0,986.6 L1378.1,991.9 L1380.0,991.3 L1383.1,981.9 L1385.6,963.1 L1387.5,906.7 L1389.4,859.7 L1391.3,800.1 L1393.8,781.3 L1395.0,750.0 L1395.7,731.3 L1397.2,568.3 L1398.8,380.3 L1400.1,333.3 L1401.9,330.2 L1403.8,317.7 L1406.6,316.1 L1409.8,320.8 L1412.9,323.9 L1414.5,330.2 L1416.0,349.0 L1418.2,369.4 L1420.1,370.9 L1422.3,392.9 L1425.4,417.9 L1427.0,418.6 L1429.5,435.2 L1431.7,438.3 L1433.3,505.7 L1435.8,521.3 L1437.3,616.9 L1438.6,618.5 L1440.2,693.7 L1441.4,724.1 L1442.7,721.9 L1445.2,681.1 L1446.4,674.9 L1448.3,646.7 L1451.4,637.3 L1453.9,592.8 L1455.2,591.8 L1457.1,522.9 L1459.0,521.3 L1460.2,396.0 L1460.8,355.3 L1462.7,352.8 L1465.2,353.4 L1467.1,374.1 L1469.0,388.2 L1470.9,389.7 L1472.7,433.6 L1474.6,435.2 L1477.1,454.0 L1479.0,458.0 L1481.5,454.9 L1484.0,458.7 L1486.5,461.8 L1488.1,463.4 L1489.7,519.8 L1490.6,520.7 L1492.2,579.3 L1493.4,552.7 L1494.7,568.3 L1495.9,572.1" stroke="#800000" stroke-width="1.6" stroke-linejoin="round"/>
<path d="M1579.6,454.6 L1580.5,478.1 L1583.0,474.3 L1584.3,475.9 L1585.2,458.7 L1586.8,455.5 L1588.1,457.1 L1588.7,537.0 L1589.9,582.4 L1591.8,584.0 L1593.1,582.4 L1595.0,555.8 L1596.8,548.0 L1598.1,474.3 L1599.3,435.2 L1600.6,433.6 L1601.8,397.6 L1603.7,393.8 L1605.6,399.1 L1607.5,400.7 L1608.7,394.4 L1610.6,417.3 L1611.9,417.3 L1613.8,380.3 L1615.0,377.2 L1615.9,396.0 L1616.6,599.7 L1617.2,755.1 L1617.8,1241.0 L1623.5,1241.0 L1624.4,755.1 L1625.0,537.0 L1625.7,421.1 L1627.5,416.4 L1630.0,410.1 L1631.9,409.5 L1633.2,443.0 L1634.4,505.7 L1635.7,599.7 L1636.9,649.8 L1638.8,693.7 L1640.1,731.3 L1641.3,755.1 L1643.2,781.3 L1645.7,812.7 L1647.6,853.4 L1649.5,855.9 L1651.4,891.0 L1653.9,909.8 L1656.4,919.2 L1658.2,938.0 L1659.5,959.9 L1660.4,964.6" stroke="#800000" stroke-width="1.6" stroke-linejoin="round"/>
<path d="M1745.0,671.1 L1745.7,656.1 L1746.6,668.6 L1747.9,599.7 L1749.1,552.7 L1751.0,532.3 L1752.2,530.7 L1753.5,443.0 L1754.8,411.7 L1756.0,398.5 L1756.6,421.1 L1757.6,631.0 L1758.2,755.1 L1758.8,1241.0 L1760.1,1241.0 L1760.4,449.3 L1761.6,442.1 L1767.3,442.1 L1768.5,450.8 L1770.1,451.8 L1771.7,568.3 L1774.2,662.3 L1776.1,681.1 L1777.9,725.0 L1779.2,755.1 L1779.8,782.9 L1781.1,793.2 L1783.0,765.7 L1784.2,755.1 L1786.7,693.7 L1789.2,671.7 L1791.1,662.3 L1792.4,584.0 L1793.6,540.1 L1794.9,549.5 L1796.1,560.5 L1797.4,537.0 L1798.6,396.0 L1799.9,361.5 L1801.8,360.6 L1803.6,361.5 L1805.5,380.3 L1808.0,385.0 L1810.5,391.3 L1813.0,394.4 L1814.3,505.7 L1815.2,755.1 L1815.9,1241.0 L1817.4,1241.0 L1818.0,755.1 L1818.4,430.5 L1819.0,430.5 L1819.6,568.3 L1820.6,627.9 L1821.8,596.5 L1823.7,596.5 L1824.9,603.4 L1827.4,587.1 L1829.3,571.5 L1830.6,560.5 L1832.5,582.4 L1834.3,587.1 L1836.2,596.5 L1837.5,631.0 L1838.4,652.3 L1840.0,631.0 L1841.9,537.0 L1843.1,458.7 L1844.4,426.4 L1846.2,425.8 L1847.5,396.0 L1848.8,381.9 L1850.0,381.3 L1851.3,402.3 L1852.5,406.0 L1854.4,424.2 L1856.3,433.6 L1858.8,435.2 L1860.7,474.3 L1862.5,479.0 L1864.4,534.8 L1866.3,535.4 L1868.2,515.1 L1870.1,575.2 L1871.9,555.8 L1873.8,491.6 L1875.1,548.0 L1877.0,548.0 L1878.8,521.3 L1881.3,505.7 L1883.2,502.5 L1885.1,505.7 L1887.0,515.1 L1889.5,527.0 L1890.7,443.0 L1892.0,380.3 L1893.9,349.0 L1895.8,333.3 L1898.3,332.7 L1900.1,345.9 L1902.0,346.5 L1903.9,380.3 L1905.8,381.9 L1907.7,411.7 L1909.5,443.0 L1910.2,568.3 L1910.5,755.1 L1910.8,844.0 L1912.1,922.3 L1914.6,950.5 L1916.4,953.7 L1918.3,991.3 L1920.2,995.0 L1922.7,995.0 L1924.6,950.5 L1927.1,947.4 L1929.0,875.3 L1930.9,814.2 L1932.7,812.7 L1933.4,750.0 L1933.7,505.7 L1934.6,380.3 L1936.5,345.9 L1937.7,333.3 L1939.0,332.7 L1940.3,345.9 L1941.5,346.5 L1943.1,321.4 L1944.6,352.1 L1946.5,352.8 L1948.4,334.9 L1950.3,332.7 L1952.2,338.0 L1954.0,355.3 L1955.9,366.2 L1957.8,368.4 L1959.7,396.0 L1961.6,399.1 L1964.1,458.7 L1965.9,463.4 L1967.8,518.2 L1969.7,519.8 L1970.6,599.7 L1971.3,755.1 L1971.6,775.1 L1973.5,775.7 L1974.7,797.0 L1976.6,797.6 L1977.9,768.8 L1979.1,725.0 L1981.0,693.7 L1982.2,681.8 L1984.1,681.1 L1986.0,688.0 L1992.6,686.8 L1993.2,568.3 L1994.1,411.7 L1995.4,386.6 L1997.3,363.1 L1999.2,360.6 L2001.7,364.7 L2005.4,364.7 L2006.1,505.7 L2006.4,755.1 L2007.0,1241.0 L2010.1,1241.0 L2010.4,568.3 L2011.1,455.5 L2012.9,454.0 L2014.8,461.8 L2016.7,460.2 L2018.6,443.0 L2020.5,442.1 L2022.3,461.8 L2024.2,462.4 L2026.1,443.0 L2028.0,433.6 L2029.9,430.5 L2031.1,443.0 L2032.4,568.3 L2033.6,755.1 L2034.3,779.8 L2036.1,780.7 L2038.0,725.0 L2039.3,718.7 L2040.2,521.3 L2041.8,518.2 L2043.0,499.4 L2044.3,487.5 L2045.5,521.3 L2047.4,549.5 L2049.9,566.8 L2051.2,499.4 L2052.4,521.3 L2054.3,522.9 L2056.8,537.0 L2059.3,551.1 L2060.6,568.3 L2062.5,593.4 L2063.7,603.4 L2065.6,601.2 L2066.8,599.7 L2068.7,568.3 L2070.0,555.8 L2071.3,557.4 L2073.1,580.9 L2075.0,579.3 L2076.3,552.7 L2078.1,551.7 L2080.0,567.7 L2081.9,566.8 L2083.8,559.6 L2088.8,559.6 L2090.7,577.7 L2091.9,583.4 L2093.8,574.6 L2095.1,496.3 L2096.9,499.4 L2098.8,537.0 L2100.7,575.2 L2102.6,560.5 L2104.5,558.9 L2106.3,505.7 L2107.6,427.3 L2109.5,408.5 L2111.4,397.6 L2113.2,396.6 L2115.7,383.5 L2118.3,372.5 L2120.8,369.4 L2123.9,358.4 L2126.4,353.7 L2129.5,350.6 L2132.0,345.9 L2134.5,344.3 L2137.1,340.5 L2142.7,340.2 L2143.9,345.9 L2145.2,360.0 L2147.1,345.9 L2149.0,345.2 L2150.8,352.1 L2152.7,345.9 L2154.0,345.2 L2155.9,356.8 L2157.7,367.8 L2159.6,370.9 L2160.9,396.0 L2162.7,443.0 L2164.6,468.1 L2166.5,486.2 L2168.4,487.5 L2170.3,493.1 L2172.1,498.8 L2174.0,495.6 L2175.9,494.7 L2177.2,480.0 L2178.4,537.0 L2179.0,566.8 L2180.9,555.8 L2182.8,537.0 L2184.7,519.8 L2186.6,524.5 L2188.4,530.7 L2189.7,532.3 L2191.6,558.9 L2193.5,546.4 L2194.7,540.1 L2196.6,555.8 L2200.3,556.4 L2202.2,565.2 L2204.1,599.7 L2206.0,584.0 L2207.2,411.7 L2209.1,369.4 L2211.0,367.8 L2212.9,362.2 L2214.1,376.6 L2219.8,377.2 L2220.4,505.7 L2221.0,755.1 L2222.0,1241.0 L2223.5,1241.0 L2224.8,755.1 L2225.4,443.0 L2226.7,442.1 L2229.8,446.1 L2232.9,446.8 L2235.4,450.8 L2236.1,568.3 L2236.7,755.1 L2237.3,844.0 L2238.6,938.0 L2240.5,950.5 L2241.7,991.3 L2243.6,991.9 L2244.8,875.3 L2245.5,802.6 L2247.4,802.0 L2248.6,875.3 L2249.2,952.1 L2251.1,952.1 L2252.4,925.5 L2254.2,903.5 L2256.1,853.4 L2258.0,842.4 L2259.3,797.0 L2260.5,773.5 L2261.8,771.9 L2262.4,750.0 L2263.0,715.6 L2264.9,707.8 L2266.8,674.9 L2268.7,659.2 L2270.5,656.7 L2272.4,671.7 L2274.3,688.0 L2275.6,637.3 L2278.1,621.6 L2279.3,612.2 L2280.6,611.3 L2281.8,537.0 L2283.1,458.7 L2284.3,433.6 L2286.2,425.8 L2288.1,422.6 L2290.0,425.8 L2291.8,426.7 L2293.7,430.5 L2295.6,443.0 L2296.9,449.9 L2298.1,450.8 L2299.4,537.0 L2300.6,584.0 L2302.5,590.3 L2303.8,599.7 L2305.6,596.5 L2306.9,596.5 L2308.8,609.1 L2310.6,620.0 L2313.2,621.0 L2315.0,622.2 L2316.9,624.7 L2318.2,616.9 L2319.4,646.7 L2320.7,669.2 L2321.9,670.2 L2323.2,693.7 L2323.8,710.9 L2325.7,703.1 L2326.9,700.6 L2328.8,706.2 L2330.7,712.5 L2332.6,713.4 L2332.9,755.1 L2333.2,812.7 L2333.8,845.6 L2335.7,847.1 L2337.0,866.6 L2340.1,867.5 L2342.6,878.5 L2345.7,884.7 L2348.2,884.1 L2349.5,887.9 L2350.8,885.4 L2351.4,891.0 L2352.6,850.3 L2353.9,846.5 L2355.1,847.8 L2356.4,891.0 L2357.6,912.9 L2359.5,914.5 L2360.8,909.2 L2362.7,916.1 L2364.5,919.2 L2367.0,915.4 L2369.6,916.1 L2371.4,925.5 L2372.7,934.9 L2373.9,927.0 L2375.8,938.0 L2377.1,942.7 L2379.0,933.3 L2380.2,944.3 L2382.1,958.4 L2384.0,963.1 L2385.8,974.0 L2388.4,976.2 L2390.2,985.0 L2392.1,1001.3 L2394.0,1001.9 L2395.2,969.3 L2395.9,947.4 L2399.0,948.0 L2400.3,969.3 L2401.5,988.1 L2402.8,906.7 L2404.0,894.1 L2405.3,892.6 L2406.5,975.0 L2410.3,975.0 L2411.5,922.3 L2412.8,913.6 L2414.0,923.9 L2415.9,897.3 L2417.8,892.6 L2419.7,891.0 L2420.9,870.6 L2422.8,878.5 L2424.1,912.9 L2425.3,969.3 L2427.2,994.4 L2429.1,1005.4 L2431.9,1009.4" stroke="#800000" stroke-width="1.6" stroke-linejoin="round"/>
<line x1="1133.7" y1="960.6" x2="1219.5" y2="389.7" stroke="#e6cccc" stroke-width="1.4" stroke-dasharray="9 3"/>
<circle cx="1133.7" cy="960.6" r="5.6" stroke="#800000" stroke-width="1.5"/>
<circle cx="1219.5" cy="389.7" r="5.6" stroke="#800000" stroke-width="1.5"/>
<line x1="1495.9" y1="572.1" x2="1579.6" y2="454.6" stroke="#e6cccc" stroke-width="1.4" stroke-dasharray="9 3"/>
<circle cx="1495.9" cy="572.1" r="5.6" stroke="#800000" stroke-width="1.5"/>
<circle cx="1579.6" cy="454.6" r="5.6" stroke="#800000" stroke-width="1.5"/>
<line x1="1660.4" y1="964.6" x2="1745.0" y2="671.1" stroke="#e6cccc" stroke-width="1.4" stroke-dasharray="9 3"/>
<circle cx="1660.4" cy="964.6" r="5.6" stroke="#800000" stroke-width="1.5"/>
<circle cx="1745.0" cy="671.1" r="5.6" stroke="#800000" stroke-width="1.5"/>
<line x1="2431.9" y1="1009.4" x2="2519.0" y2="1241.0" stroke="#e6cccc" stroke-width="1.4" stroke-dasharray="9 3"/>
<circle cx="2431.9" cy="1009.4" r="5.6" stroke="#800000" stroke-width="1.5"/>
<circle cx="2519.0" cy="1241.0" r="5.6" stroke="#800000" stroke-width="1.5"/>
</g>
<line x1="703.3" y1="1242" x2="2744" y2="1242" stroke="#000" stroke-width="2"/>
</svg>

 <!-- Dial panel -->
 <div class="panel dark" style="left:18.1px;top:1340.2px;width:861.9px;height:491.5px">
  <div class="hdr"></div>
  <div class="ttl">Dial</div>
  <div class="menu" style="left:730.7px">Menu</div>
  <div class="white" style="left:11.8px;top:95.8px;width:834.4px;height:380px"></div>
 </div>
<svg class="dial" width="2780" height="1920" viewBox="0 0 2780 1920">
<defs>
<radialGradient id="rim" cx="0.5" cy="0.5" r="0.5"><stop offset="0" stop-color="#000"/><stop offset="0.86" stop-color="#0a0a0a"/><stop offset="0.885" stop-color="#2c2c2c"/><stop offset="0.94" stop-color="#242424"/><stop offset="1" stop-color="#171717"/></radialGradient>
<radialGradient id="hub" cx="0.5" cy="0.55" r="0.5"><stop offset="0" stop-color="#6a6a6a"/><stop offset="0.7" stop-color="#4a4a4a"/><stop offset="0.93" stop-color="#333"/><stop offset="1" stop-color="#1a1a1a"/></radialGradient>
<radialGradient id="shadow" cx="0.5" cy="0.5" r="0.5"><stop offset="0.86" stop-color="#000" stop-opacity="0.26"/><stop offset="0.93" stop-color="#000" stop-opacity="0.08"/><stop offset="1" stop-color="#000" stop-opacity="0"/></radialGradient>
<linearGradient id="ndl" x1="0" y1="0" x2="1" y2="0"><stop offset="0" stop-color="#fff"/><stop offset="1" stop-color="#fff"/></linearGradient>
</defs>
<circle cx="451.2" cy="1626.8" r="191.4" fill="url(#shadow)"/>
<circle cx="446.2" cy="1619.8" r="172.4" fill="url(#rim)"/>
<line x1="344.4" y1="1703.1" x2="328.6" y2="1716.1" stroke="#fff" stroke-width="7.4"/>
<line x1="332.2" y1="1702.8" x2="324.5" y2="1708.4" stroke="#fff" stroke-width="3.2"/>
<line x1="327.7" y1="1696.3" x2="319.7" y2="1701.4" stroke="#fff" stroke-width="3.2"/>
<line x1="323.6" y1="1689.5" x2="315.3" y2="1694.1" stroke="#fff" stroke-width="3.2"/>
<line x1="319.9" y1="1682.4" x2="311.4" y2="1686.6" stroke="#fff" stroke-width="3.2"/>
<line x1="316.5" y1="1675.2" x2="307.8" y2="1678.9" stroke="#fff" stroke-width="3.2"/>
<line x1="313.6" y1="1667.8" x2="304.7" y2="1671.0" stroke="#fff" stroke-width="3.2"/>
<line x1="311.1" y1="1660.3" x2="302.0" y2="1663.0" stroke="#fff" stroke-width="3.2"/>
<line x1="309.1" y1="1652.6" x2="299.8" y2="1654.8" stroke="#fff" stroke-width="3.2"/>
<line x1="307.4" y1="1644.8" x2="298.1" y2="1646.5" stroke="#fff" stroke-width="3.2"/>
<line x1="315.7" y1="1635.8" x2="295.3" y2="1638.3" stroke="#fff" stroke-width="7.4"/>
<line x1="305.5" y1="1629.0" x2="296.0" y2="1629.6" stroke="#fff" stroke-width="3.2"/>
<line x1="305.2" y1="1621.1" x2="295.7" y2="1621.1" stroke="#fff" stroke-width="3.2"/>
<line x1="305.4" y1="1613.1" x2="295.9" y2="1612.7" stroke="#fff" stroke-width="3.2"/>
<line x1="306.0" y1="1605.2" x2="296.5" y2="1604.2" stroke="#fff" stroke-width="3.2"/>
<line x1="307.0" y1="1597.3" x2="297.6" y2="1595.8" stroke="#fff" stroke-width="3.2"/>
<line x1="308.5" y1="1589.5" x2="299.2" y2="1587.4" stroke="#fff" stroke-width="3.2"/>
<line x1="310.4" y1="1581.8" x2="301.3" y2="1579.2" stroke="#fff" stroke-width="3.2"/>
<line x1="312.8" y1="1574.2" x2="303.8" y2="1571.1" stroke="#fff" stroke-width="3.2"/>
<line x1="315.6" y1="1566.7" x2="306.8" y2="1563.1" stroke="#fff" stroke-width="3.2"/>
<line x1="327.4" y1="1563.5" x2="308.8" y2="1554.7" stroke="#fff" stroke-width="7.4"/>
<line x1="322.4" y1="1552.3" x2="314.0" y2="1547.8" stroke="#fff" stroke-width="3.2"/>
<line x1="326.4" y1="1545.5" x2="318.3" y2="1540.5" stroke="#fff" stroke-width="3.2"/>
<line x1="330.8" y1="1538.8" x2="323.0" y2="1533.4" stroke="#fff" stroke-width="3.2"/>
<line x1="335.5" y1="1532.4" x2="328.1" y2="1526.6" stroke="#fff" stroke-width="3.2"/>
<line x1="340.6" y1="1526.3" x2="333.5" y2="1520.1" stroke="#fff" stroke-width="3.2"/>
<line x1="346.1" y1="1520.5" x2="339.3" y2="1513.9" stroke="#fff" stroke-width="3.2"/>
<line x1="351.8" y1="1515.1" x2="345.5" y2="1508.0" stroke="#fff" stroke-width="3.2"/>
<line x1="357.9" y1="1509.9" x2="351.9" y2="1502.5" stroke="#fff" stroke-width="3.2"/>
<line x1="364.2" y1="1505.1" x2="358.7" y2="1497.4" stroke="#fff" stroke-width="3.2"/>
<line x1="375.9" y1="1508.7" x2="364.9" y2="1491.4" stroke="#fff" stroke-width="7.4"/>
<line x1="377.6" y1="1496.6" x2="373.0" y2="1488.3" stroke="#fff" stroke-width="3.2"/>
<line x1="384.7" y1="1492.9" x2="380.6" y2="1484.4" stroke="#fff" stroke-width="3.2"/>
<line x1="392.0" y1="1489.7" x2="388.3" y2="1480.9" stroke="#fff" stroke-width="3.2"/>
<line x1="399.4" y1="1486.8" x2="396.2" y2="1477.8" stroke="#fff" stroke-width="3.2"/>
<line x1="407.0" y1="1484.4" x2="404.3" y2="1475.2" stroke="#fff" stroke-width="3.2"/>
<line x1="414.6" y1="1482.4" x2="412.5" y2="1473.1" stroke="#fff" stroke-width="3.2"/>
<line x1="422.4" y1="1480.8" x2="420.8" y2="1471.5" stroke="#fff" stroke-width="3.2"/>
<line x1="430.3" y1="1479.7" x2="429.3" y2="1470.3" stroke="#fff" stroke-width="3.2"/>
<line x1="438.2" y1="1479.0" x2="437.7" y2="1469.5" stroke="#fff" stroke-width="3.2"/>
<line x1="446.2" y1="1488.3" x2="446.2" y2="1467.8" stroke="#fff" stroke-width="7.4"/>
<line x1="454.2" y1="1479.0" x2="454.7" y2="1469.5" stroke="#fff" stroke-width="3.2"/>
<line x1="462.1" y1="1479.7" x2="463.1" y2="1470.3" stroke="#fff" stroke-width="3.2"/>
<line x1="470.0" y1="1480.8" x2="471.6" y2="1471.5" stroke="#fff" stroke-width="3.2"/>
<line x1="477.8" y1="1482.4" x2="479.9" y2="1473.1" stroke="#fff" stroke-width="3.2"/>
<line x1="485.4" y1="1484.4" x2="488.1" y2="1475.2" stroke="#fff" stroke-width="3.2"/>
<line x1="493.0" y1="1486.8" x2="496.2" y2="1477.8" stroke="#fff" stroke-width="3.2"/>
<line x1="500.4" y1="1489.7" x2="504.1" y2="1480.9" stroke="#fff" stroke-width="3.2"/>
<line x1="507.7" y1="1492.9" x2="511.8" y2="1484.4" stroke="#fff" stroke-width="3.2"/>
<line x1="514.8" y1="1496.6" x2="519.4" y2="1488.3" stroke="#fff" stroke-width="3.2"/>
<line x1="516.5" y1="1508.7" x2="527.5" y2="1491.4" stroke="#fff" stroke-width="7.4"/>
<line x1="528.2" y1="1505.1" x2="533.7" y2="1497.4" stroke="#fff" stroke-width="3.2"/>
<line x1="534.5" y1="1509.9" x2="540.5" y2="1502.5" stroke="#fff" stroke-width="3.2"/>
<line x1="540.6" y1="1515.1" x2="546.9" y2="1508.0" stroke="#fff" stroke-width="3.2"/>
<line x1="546.3" y1="1520.5" x2="553.1" y2="1513.9" stroke="#fff" stroke-width="3.2"/>
<line x1="551.8" y1="1526.3" x2="558.9" y2="1520.1" stroke="#fff" stroke-width="3.2"/>
<line x1="556.9" y1="1532.4" x2="564.3" y2="1526.6" stroke="#fff" stroke-width="3.2"/>
<line x1="561.6" y1="1538.8" x2="569.4" y2="1533.4" stroke="#fff" stroke-width="3.2"/>
<line x1="566.0" y1="1545.5" x2="574.1" y2="1540.5" stroke="#fff" stroke-width="3.2"/>
<line x1="570.0" y1="1552.3" x2="578.4" y2="1547.8" stroke="#fff" stroke-width="3.2"/>
<line x1="565.0" y1="1563.5" x2="583.6" y2="1554.7" stroke="#fff" stroke-width="7.4"/>
<line x1="576.8" y1="1566.7" x2="585.6" y2="1563.1" stroke="#fff" stroke-width="3.2"/>
<line x1="579.6" y1="1574.2" x2="588.6" y2="1571.1" stroke="#fff" stroke-width="3.2"/>
<line x1="582.0" y1="1581.8" x2="591.1" y2="1579.2" stroke="#fff" stroke-width="3.2"/>
<line x1="583.9" y1="1589.5" x2="593.2" y2="1587.4" stroke="#fff" stroke-width="3.2"/>
<line x1="585.4" y1="1597.3" x2="594.8" y2="1595.8" stroke="#fff" stroke-width="3.2"/>
<line x1="586.4" y1="1605.2" x2="595.9" y2="1604.2" stroke="#fff" stroke-width="3.2"/>
<line x1="587.0" y1="1613.1" x2="596.5" y2="1612.7" stroke="#fff" stroke-width="3.2"/>
<line x1="587.2" y1="1621.1" x2="596.7" y2="1621.1" stroke="#fff" stroke-width="3.2"/>
<line x1="586.9" y1="1629.0" x2="596.4" y2="1629.6" stroke="#fff" stroke-width="3.2"/>
<line x1="576.7" y1="1635.8" x2="597.1" y2="1638.3" stroke="#fff" stroke-width="7.4"/>
<line x1="585.0" y1="1644.8" x2="594.3" y2="1646.5" stroke="#fff" stroke-width="3.2"/>
<line x1="583.3" y1="1652.6" x2="592.6" y2="1654.8" stroke="#fff" stroke-width="3.2"/>
<line x1="581.3" y1="1660.3" x2="590.4" y2="1663.0" stroke="#fff" stroke-width="3.2"/>
<line x1="578.8" y1="1667.8" x2="587.7" y2="1671.0" stroke="#fff" stroke-width="3.2"/>
<line x1="575.9" y1="1675.2" x2="584.6" y2="1678.9" stroke="#fff" stroke-width="3.2"/>
<line x1="572.5" y1="1682.4" x2="581.0" y2="1686.6" stroke="#fff" stroke-width="3.2"/>
<line x1="568.8" y1="1689.5" x2="577.1" y2="1694.1" stroke="#fff" stroke-width="3.2"/>
<line x1="564.7" y1="1696.3" x2="572.7" y2="1701.4" stroke="#fff" stroke-width="3.2"/>
<line x1="560.2" y1="1702.8" x2="567.9" y2="1708.4" stroke="#fff" stroke-width="3.2"/>
<line x1="548.0" y1="1703.1" x2="563.8" y2="1716.1" stroke="#fff" stroke-width="7.4"/>
<text x="447.0" y="1515.9" text-anchor="middle" fill="#fff" font-size="18" letter-spacing="1.2" font-family="DejaVu Sans, sans-serif">4000</text>
<text x="392.3" y="1532.3" text-anchor="middle" fill="#fff" font-size="18" letter-spacing="1.2" font-family="DejaVu Sans, sans-serif">3000</text>
<text x="502.3" y="1532.3" text-anchor="middle" fill="#fff" font-size="18" letter-spacing="1.2" font-family="DejaVu Sans, sans-serif">5000</text>
<text x="354.6" y="1575.2" text-anchor="middle" fill="#fff" font-size="18" letter-spacing="1.2" font-family="DejaVu Sans, sans-serif">2000</text>
<text x="539.2" y="1575.2" text-anchor="middle" fill="#fff" font-size="18" letter-spacing="1.2" font-family="DejaVu Sans, sans-serif">6000</text>
<text x="346.3" y="1631.4" text-anchor="middle" fill="#fff" font-size="18" letter-spacing="1.2" font-family="DejaVu Sans, sans-serif">1000</text>
<text x="548.2" y="1631.4" text-anchor="middle" fill="#fff" font-size="18" letter-spacing="1.2" font-family="DejaVu Sans, sans-serif">7000</text>
<text x="367.70000000000005" y="1683.0" text-anchor="middle" fill="#fff" font-size="18" letter-spacing="0" font-family="DejaVu Sans, sans-serif">0</text>
<text x="525.1" y="1683.0" text-anchor="middle" fill="#fff" font-size="18" letter-spacing="1.2" font-family="DejaVu Sans, sans-serif">8000</text>
<text x="443.3" y="1705.2" text-anchor="middle" fill="#fff" font-size="18" font-weight="bold" font-family="DejaVu Sans, sans-serif">Revolution</text>
<text x="443.3" y="1728.8" text-anchor="middle" fill="#fff" font-size="18" letter-spacing="1" font-family="DejaVu Sans, sans-serif">[RPM]</text>
<polygon points="430.7,1626.4 340.1,1704.4 341.9,1706.8 436.7,1633.8" fill="#fff"/>
<polygon points="432.0,1628.0 361.5,1688.7 361.7,1689.0 435.4,1632.2" fill="#e00000"/>
<circle cx="444.0" cy="1621.7" r="25.8" fill="url(#hub)"/>
</svg>

 <!-- Actual values panel -->
 <div class="panel dark" style="left:914px;top:1340.2px;width:1843.5px;height:491.5px">
  <div class="hdr"></div>
  <div class="ttl">Actual values</div>
  <div class="menu" style="left:1712px">Menu</div>
  <div class="white" style="left:12.2px;top:95.8px;width:1816px;height:380px">
   <div class="card" style="top:-24.5px">
     <div class="nm">CBOX200: U Accu 2</div><div class="dash"></div>
     <div class="mm" style="top:36.6px">Min: 6.4 V</div><div class="mm" style="top:76px">Max: 6.6 V</div>
   </div>
   <div class="card" style="top:109.5px">
     <div class="nm">CBOX200: I Accu 1</div><div class="dash"></div>
     <div class="mm" style="top:36.6px">Min: 0.16 A</div><div class="mm" style="top:76px">Max: 7.26 A</div>
   </div>
   <div class="card" style="top:243.5px">
     <div class="nm">CBOX200: I Accu 2</div><div class="dash"></div>
     <div class="mm" style="top:36.6px">Min: 0.14 A</div><div class="mm" style="top:76px">Max: 7.09 A</div>
   </div>
   <div class="abs" style="left:1799.5px;top:271px;width:12.5px;height:88px;border-radius:6px;background:#c9c9c9"></div>
  </div>
 </div>

 <div id="status"></div>
 <div id="combo"><span>None</span><i></i>
  <svg class="abs" style="right:0;top:0" width="33" height="39" viewBox="0 0 33 39"><path d="M10 15.6 L16.5 9.4 L23 15.6 M10 23.6 L16.5 29.8 L23 23.6" fill="none" stroke="#fff" stroke-width="2.6" stroke-linecap="round" stroke-linejoin="round"/></svg>
 </div>
 <svg class="abs" style="left:2690px;top:1845px" width="80" height="70" viewBox="0 0 80 70">
  <g fill="#b0b0b0" stroke="#b0b0b0" stroke-linecap="butt">
   <ellipse cx="41" cy="21.8" rx="7.4" ry="5.9" transform="rotate(-42 41 21.8)"/>
   <line x1="44" y1="19" x2="51" y2="12" stroke-width="4"/>
  </g>
  <g fill="#a8a8a8" stroke="#a8a8a8" stroke-linecap="butt">
   <ellipse cx="22.8" cy="40" rx="7.4" ry="5.9" transform="rotate(-42 22.8 40)"/>
   <line x1="20" y1="43" x2="13" y2="50" stroke-width="4"/>
  </g>
  <defs><linearGradient id="rx" x1="0" y1="0" x2="0" y2="1"><stop offset="0" stop-color="#9c0000"/><stop offset="0.45" stop-color="#cc1400"/><stop offset="1" stop-color="#e63a00"/></linearGradient></defs>
  <rect x="40" y="39" width="12" height="12.4" fill="url(#rx)"/>
  <path d="M42.8 37.2 v2 M48.8 37.2 v2 M42.8 51.2 v2 M48.8 51.2 v2 M38 42 h2 M38 48 h2 M52 42 h2 M52 48 h2" stroke="#e0705c" stroke-width="1.6"/>
 </svg>
</div>
</body></html>
